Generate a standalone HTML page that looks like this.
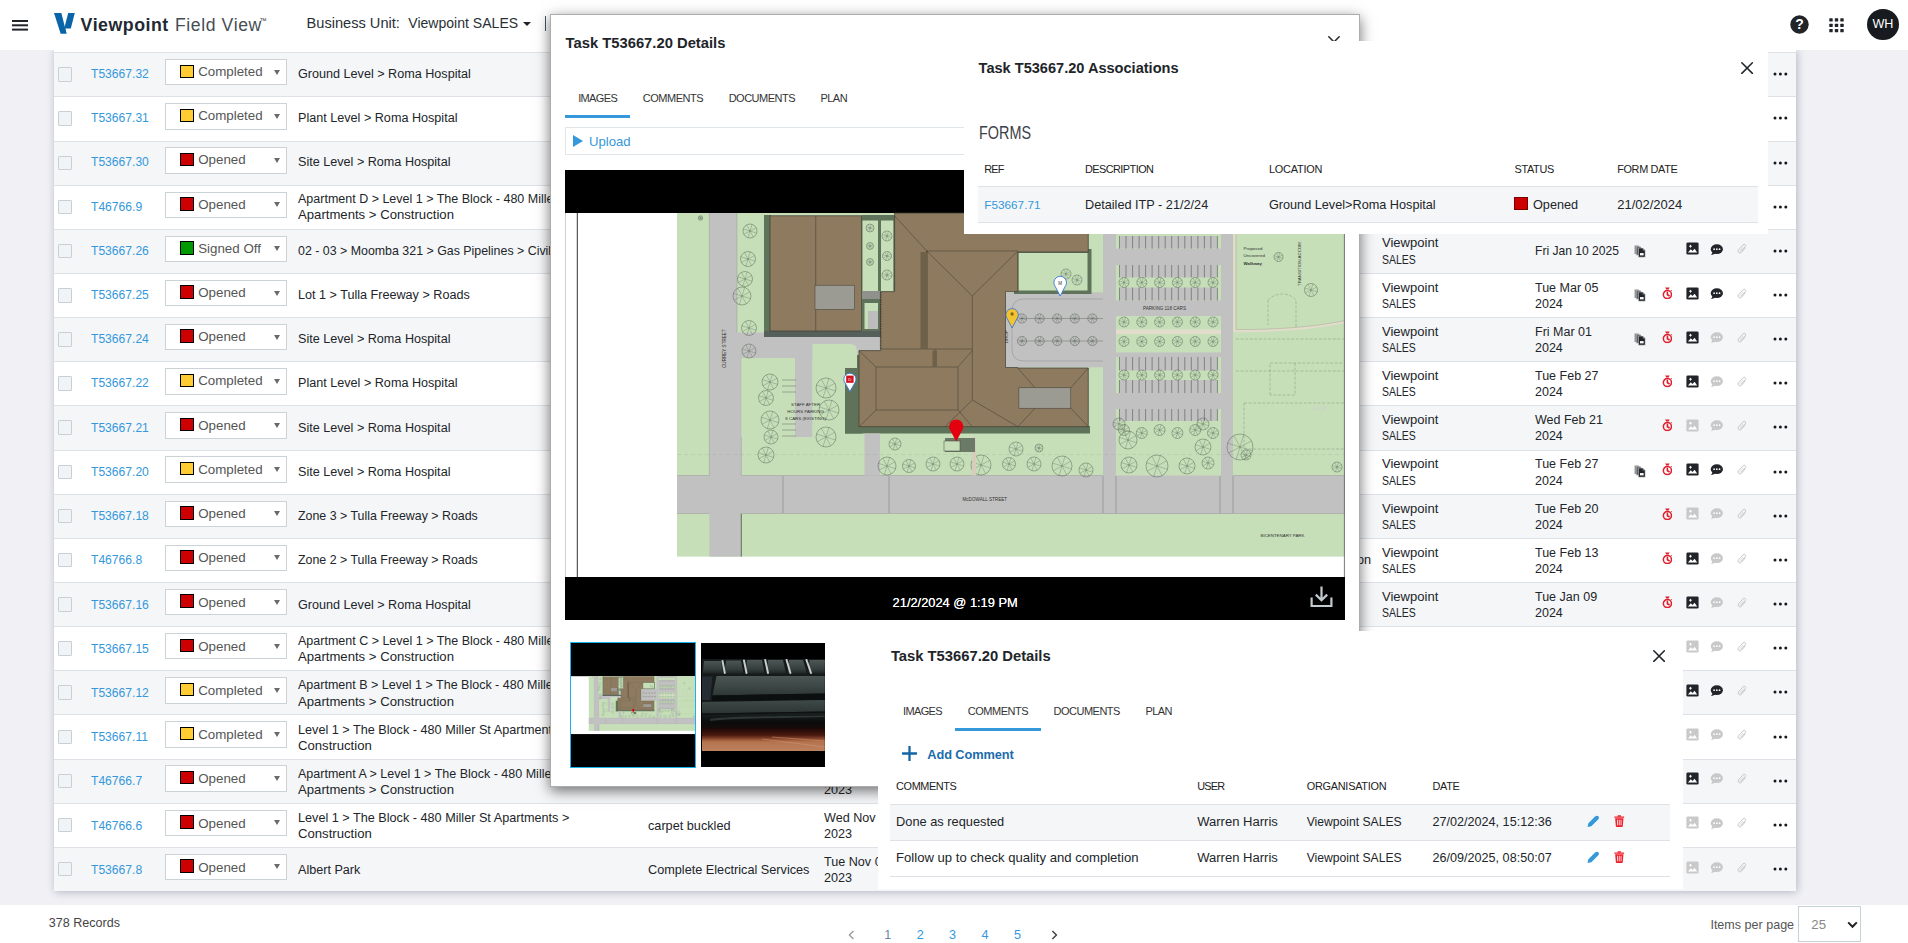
<!DOCTYPE html><html><head><meta charset="utf-8"><title>Viewpoint Field View</title><style>
*{box-sizing:border-box;margin:0;padding:0}
html,body{width:1908px;height:943px;overflow:hidden}
body{background:#f0f0f5;font-family:"Liberation Sans", sans-serif;color:#212529;position:relative}
.t{position:absolute;white-space:nowrap;line-height:1}
.abs{position:absolute}
#hdr{position:absolute;left:0;top:0;width:1908px;height:50px;background:#fff;z-index:2}
.ov{z-index:5}
#tbl{position:absolute;left:54px;top:50px;width:1742px;height:841px;background:#fff;box-shadow:1px 1px 8px rgba(40,40,80,.3)}
.row{position:absolute;left:0;width:1742px}
.row::before{content:"";position:absolute;left:0;right:0;top:0;height:1px;background:#dee2e6}
.row.alt{background:#f5f6f8}
.cb{position:absolute;left:4px;width:14px;height:14.5px;border:1px solid #c9d0d4;background:#f1f4f6;border-radius:1px}
.dd{position:absolute;left:111px;width:122px;height:26.4px;border:1px solid #ccd3d6;background:#fff}
.sw{position:absolute;left:13.6px;top:4.5px;width:14.3px;height:13.5px;border:1px solid #000}
.ar{position:absolute;left:108.3px;top:9.7px;width:0;height:0;border-left:3.2px solid transparent;border-right:3.2px solid transparent;border-top:5.2px solid #6a6a6a}
.two{position:absolute;line-height:16.1px;font-size:12.7px;white-space:nowrap}
#ftr{position:absolute;left:0;top:904.6px;width:1908px;height:39px;background:#fff}
#m1{position:absolute;left:549.8px;top:14.2px;width:810.4px;height:773.3px;background:#fff;border:1px solid rgba(0,0,0,.32);box-shadow:0 4px 13px rgba(0,0,0,.55)}
#p2{position:absolute;left:964px;top:41px;width:804px;height:193px;background:#fff}
#p3{position:absolute;left:878px;top:631px;width:805px;height:257.8px;background:#fff}
.hl{position:absolute;height:1px;background:#dee2e6}
</style></head><body>
<svg width="0" height="0" style="position:absolute"><defs>
<symbol id="i-img" viewBox="0 0 16 16"><rect x="0.5" y="0.5" width="15" height="15" rx="1.7" fill="currentColor"/><path d="M2.4 13 L5.9 9 L8 11 L10.6 8.4 L13.7 13 Z" fill="#fff"/><path d="M3.8 5.2h3.4M5.5 3.5v3.4" stroke="#fff" stroke-width="1.15"/></symbol>
<symbol id="i-cmt" viewBox="0 0 16 14"><ellipse cx="8.3" cy="6.3" rx="7.4" ry="5.9" fill="currentColor"/><path d="M3.4 9.8 L1.2 13.6 L7 11.6 Z" fill="currentColor"/><circle cx="5" cy="6.3" r="1.05" fill="#fff"/><circle cx="8.3" cy="6.3" r="1.05" fill="#fff"/><circle cx="11.6" cy="6.3" r="1.05" fill="#fff"/></symbol>
<symbol id="i-clip" viewBox="0 0 12 13"><g transform="translate(6 6.5) rotate(42) translate(-2.4 -6.4)"><path d="M4.6 3.6 V10.2 A2.2 2.2 0 0 1 0.2 10.2 V2.4 A1.7 1.7 0 0 1 3.6 2.4 V9.6" fill="none" stroke="currentColor" stroke-width=".95" stroke-linecap="round"/><path d="M2.1 9.8 V4" fill="none" stroke="currentColor" stroke-width=".7" stroke-linecap="round" opacity=".8"/></g></symbol>
<symbol id="i-copy" viewBox="0 0 13 14"><path d="M0.6 1.2 h4.2 l1.8 1.8 v7.2 h-6 z" fill="#8a8d90"/><path d="M2.4 2.4 h4.2 l1.8 1.8 v7.2 h-6 z" fill="#55595d" stroke="#fff" stroke-width=".4"/><path d="M4.6 3.9 h4.6 l2.6 2.6 v7 h-7.2 z" fill="#212529" stroke="#fff" stroke-width=".5"/><rect x="6.3" y="9.2" width="3.8" height="2.4" fill="#fff"/><path d="M9.2 3.9 v2.6 h2.6" fill="#8a8d90"/></symbol>
<symbol id="i-tmr" viewBox="0 0 12 14"><circle cx="6" cy="8.4" r="4.5" fill="none" stroke="currentColor" stroke-width="1.7"/><path d="M3.5 0.5 h5 l-1.3 2.4 h-2.4 z" fill="currentColor"/><path d="M6 5.9 V8.6 L7.9 9.7" fill="none" stroke="currentColor" stroke-width="1.8" stroke-linecap="round" stroke-linejoin="round"/><path d="M9.9 3.7 l.9 .9" stroke="currentColor" stroke-width="1.2"/></symbol>
<symbol id="i-pen" viewBox="0 0 14 14"><path d="M0.6 13.4 L1.5 9.2 L9.3 1.4 C10.2 0.5 11.7 0.5 12.6 1.4 C13.5 2.3 13.5 3.8 12.6 4.7 L4.8 12.5 Z" fill="currentColor"/></symbol>
<symbol id="i-trash" viewBox="0 0 12 14"><path d="M1.3 3.6 h9.4 l-.8 9 c0 .6 -.5 1 -1.1 1 h-5.6 c-.6 0 -1.1 -.4 -1.1 -1 z" fill="currentColor"/><rect x="0.4" y="1.6" width="11.2" height="1.5" rx=".4" fill="currentColor"/><rect x="4" y="0.3" width="4" height="1.6" rx=".5" fill="currentColor"/><path d="M4 5.4 v6.2 M6 5.4 v6.2 M8 5.4 v6.2" stroke="#fff" stroke-width=".9"/></symbol>
<symbol id="i-x" viewBox="0 0 12 12"><path d="M0.8 0.8 L11.2 11.2 M11.2 0.8 L0.8 11.2" stroke="currentColor" stroke-width="1.5" stroke-linecap="round"/></symbol>
</defs></svg>
<div id="hdr">
<div class="abs" style="left:12px;top:19.6px;width:16.3px;height:2px;background:#212529;box-shadow:0 4.3px 0 #212529,0 8.6px 0 #212529"></div>
<svg class="abs" style="left:53px;top:12px" width="24" height="24" viewBox="0 0 24 24"><path d="M1 1 H8.4 L13.5 21.6 H7.6 Z" fill="#0a64a8"/><path d="M15.2 1 H21.8 L17.8 16.6 H11.2 Z" fill="#0a64a8"/><path d="M7.6 21.6 L9 16.6 H12.3 L13.5 21.6 Z" fill="#0a64a8"/></svg>
<span class="t " style="left:80.6px;top:17.02px;font-size:17.8px;font-weight:700;color:#1f2a33;letter-spacing:.5px">Viewpoint</span>
<span class="t " style="left:175.0px;top:17.02px;font-size:17.6px;font-weight:400;color:#454d55;letter-spacing:.6px">Field View</span>
<span class="t " style="left:259.5px;top:17.02px;font-size:7px;font-weight:400;color:#2a333b;">™</span>
<span class="t " style="left:306.6px;top:16.02px;font-size:14.6px;font-weight:400;color:#2a2f36;">Business Unit:</span>
<span class="t " style="left:408.3px;top:16.02px;font-size:14.05px;font-weight:400;color:#2a2f36;">Viewpoint SALES</span>
<div class="abs" style="left:523.4px;top:22px;border-left:4px solid transparent;border-right:4px solid transparent;border-top:4.4px solid #222"></div>
<div class="abs" style="left:545.2px;top:15.5px;width:1.2px;height:15px;background:#456"></div>
<svg class="abs" style="left:1790px;top:15px" width="19" height="19" viewBox="0 0 19 19"><circle cx="9.5" cy="9.5" r="9.2" fill="#212529"/><text x="9.5" y="14.4" text-anchor="middle" font-family="Liberation Sans, sans-serif" font-weight="700" font-size="14" fill="#fff">?</text></svg>
<svg class="abs" style="left:1828.5px;top:17.8px" width="15" height="15"><rect x="0.3" y="0.3" width="3.4" height="3.2" rx=".5" fill="#212529"/><rect x="0.3" y="5.7" width="3.4" height="3.2" rx=".5" fill="#212529"/><rect x="0.3" y="11.1" width="3.4" height="3.2" rx=".5" fill="#212529"/><rect x="5.8" y="0.3" width="3.4" height="3.2" rx=".5" fill="#212529"/><rect x="5.8" y="5.7" width="3.4" height="3.2" rx=".5" fill="#212529"/><rect x="5.8" y="11.1" width="3.4" height="3.2" rx=".5" fill="#212529"/><rect x="11.3" y="0.3" width="3.4" height="3.2" rx=".5" fill="#212529"/><rect x="11.3" y="5.7" width="3.4" height="3.2" rx=".5" fill="#212529"/><rect x="11.3" y="11.1" width="3.4" height="3.2" rx=".5" fill="#212529"/></svg>
<div class="abs" style="left:1867px;top:8.8px;width:32px;height:31.5px;border-radius:50%;background:#171b1f"></div>
<span class="t " style="left:1872.6px;top:18.02px;font-size:12.6px;font-weight:400;color:#fff;letter-spacing:-.3px">WH</span>
</div>
<div id="tbl">
<div class="row alt" style="top:2.20px;height:44.15px">
<div class="abs" style="left:0;top:.5px;width:1742px;height:0">
<div class="cb" style="top:14.6px"></div>
<span class="t " style="left:37.0px;top:15.32px;font-size:12.1px;font-weight:400;color:#3498db;">T53667.32</span>
<div class="dd" style="top:6.4px"><div class="sw" style="background:#ffcc33"></div><span class="t " style="left:32.2px;top:4.92px;font-size:13.33px;font-weight:400;color:#555;">Completed</span><div class="ar"></div></div>
<span class="t " style="left:244.0px;top:15.32px;font-size:12.62px;font-weight:400;color:#212529;">Ground Level &gt; Roma Hospital</span>
<svg class="abs" style="left:1718.6px;top:19.6px" width="15" height="4"><circle cx="2" cy="2" r="1.5" fill="#16191c"/><circle cx="7.4" cy="2" r="1.5" fill="#16191c"/><circle cx="12.8" cy="2" r="1.5" fill="#16191c"/></svg>
</div></div>
<div class="row" style="top:46.35px;height:44.15px">
<div class="abs" style="left:0;top:.5px;width:1742px;height:0">
<div class="cb" style="top:14.6px"></div>
<span class="t " style="left:37.0px;top:15.17px;font-size:12.1px;font-weight:400;color:#3498db;">T53667.31</span>
<div class="dd" style="top:6.4px"><div class="sw" style="background:#ffcc33"></div><span class="t " style="left:32.2px;top:4.77px;font-size:13.33px;font-weight:400;color:#555;">Completed</span><div class="ar"></div></div>
<span class="t " style="left:244.0px;top:15.17px;font-size:12.62px;font-weight:400;color:#212529;">Plant Level &gt; Roma Hospital</span>
<svg class="abs" style="left:1718.6px;top:19.6px" width="15" height="4"><circle cx="2" cy="2" r="1.5" fill="#16191c"/><circle cx="7.4" cy="2" r="1.5" fill="#16191c"/><circle cx="12.8" cy="2" r="1.5" fill="#16191c"/></svg>
</div></div>
<div class="row alt" style="top:90.50px;height:44.15px">
<div class="abs" style="left:0;top:.5px;width:1742px;height:0">
<div class="cb" style="top:14.6px"></div>
<span class="t " style="left:37.0px;top:15.02px;font-size:12.1px;font-weight:400;color:#3498db;">T53667.30</span>
<div class="dd" style="top:6.4px"><div class="sw" style="background:#cc0000"></div><span class="t " style="left:32.2px;top:4.62px;font-size:13.33px;font-weight:400;color:#555;">Opened</span><div class="ar"></div></div>
<span class="t " style="left:244.0px;top:15.02px;font-size:12.62px;font-weight:400;color:#212529;">Site Level &gt; Roma Hospital</span>
<svg class="abs" style="left:1718.6px;top:19.6px" width="15" height="4"><circle cx="2" cy="2" r="1.5" fill="#16191c"/><circle cx="7.4" cy="2" r="1.5" fill="#16191c"/><circle cx="12.8" cy="2" r="1.5" fill="#16191c"/></svg>
</div></div>
<div class="row" style="top:134.65px;height:44.15px">
<div class="abs" style="left:0;top:.5px;width:1742px;height:0">
<div class="cb" style="top:14.6px"></div>
<span class="t " style="left:37.0px;top:15.87px;font-size:12.1px;font-weight:400;color:#3498db;">T46766.9</span>
<div class="dd" style="top:6.4px"><div class="sw" style="background:#cc0000"></div><span class="t " style="left:32.2px;top:5.47px;font-size:13.33px;font-weight:400;color:#555;">Opened</span><div class="ar"></div></div>
<span class="t " style="left:244.0px;top:7.87px;font-size:12.5px;font-weight:400;color:#212529;">Apartment D &gt; Level 1 &gt; The Block - 480 Miller St</span><span class="t " style="left:244.0px;top:22.87px;font-size:13.15px;font-weight:400;color:#212529;">Apartments &gt; Construction</span>
<svg class="abs" style="left:1718.6px;top:19.6px" width="15" height="4"><circle cx="2" cy="2" r="1.5" fill="#16191c"/><circle cx="7.4" cy="2" r="1.5" fill="#16191c"/><circle cx="12.8" cy="2" r="1.5" fill="#16191c"/></svg>
</div></div>
<div class="row alt" style="top:178.80px;height:44.15px">
<div class="abs" style="left:0;top:.5px;width:1742px;height:0">
<div class="cb" style="top:14.6px"></div>
<span class="t " style="left:37.0px;top:15.72px;font-size:12.1px;font-weight:400;color:#3498db;">T53667.26</span>
<div class="dd" style="top:6.4px"><div class="sw" style="background:#009900"></div><span class="t " style="left:32.2px;top:5.32px;font-size:13.33px;font-weight:400;color:#555;">Signed Off</span><div class="ar"></div></div>
<span class="t " style="left:244.0px;top:15.72px;font-size:12.4px;font-weight:400;color:#212529;">02 - 03 &gt; Moomba 321 &gt; Gas Pipelines &gt; Civil</span>
<span class="t " style="left:1328.0px;top:6.72px;font-size:13.05px;font-weight:400;color:#212529;">Viewpoint</span><span class="t " style="left:1328.0px;top:24.72px;font-size:12.7px;font-weight:400;color:#212529;transform:scaleX(.826);transform-origin:0 0">SALES</span>
<span class="t " style="left:1481.0px;top:15.72px;font-size:12.08px;font-weight:400;color:#212529;">Fri Jan 10 2025</span>
<svg class="abs" style="left:1580.4px;top:14.4px;color:#212529" width="12.4" height="14"><use href="#i-copy"/></svg>
<svg class="abs" style="left:1631.7px;top:13.2px;color:#212529" width="13" height="13"><use href="#i-img"/></svg>
<svg class="abs" style="left:1656.2px;top:14.3px;color:#212529" width="13.2" height="11.6"><use href="#i-cmt"/></svg>
<svg class="abs" style="left:1683.2px;top:14.2px;color:#c2c2c2" width="10.4" height="11.2"><use href="#i-clip"/></svg>
<svg class="abs" style="left:1718.6px;top:19.6px" width="15" height="4"><circle cx="2" cy="2" r="1.5" fill="#16191c"/><circle cx="7.4" cy="2" r="1.5" fill="#16191c"/><circle cx="12.8" cy="2" r="1.5" fill="#16191c"/></svg>
</div></div>
<div class="row" style="top:222.95px;height:44.15px">
<div class="abs" style="left:0;top:.5px;width:1742px;height:0">
<div class="cb" style="top:14.6px"></div>
<span class="t " style="left:37.0px;top:15.57px;font-size:12.1px;font-weight:400;color:#3498db;">T53667.25</span>
<div class="dd" style="top:6.4px"><div class="sw" style="background:#cc0000"></div><span class="t " style="left:32.2px;top:5.17px;font-size:13.33px;font-weight:400;color:#555;">Opened</span><div class="ar"></div></div>
<span class="t " style="left:244.0px;top:15.57px;font-size:12.62px;font-weight:400;color:#212529;">Lot 1 &gt; Tulla Freeway &gt; Roads</span>
<span class="t " style="left:1328.0px;top:7.57px;font-size:13.05px;font-weight:400;color:#212529;">Viewpoint</span><span class="t " style="left:1328.0px;top:24.57px;font-size:12.7px;font-weight:400;color:#212529;transform:scaleX(.826);transform-origin:0 0">SALES</span>
<span class="t " style="left:1481.0px;top:8.57px;font-size:12.5px;font-weight:400;color:#212529;">Tue Mar 05</span><span class="t " style="left:1481.0px;top:24.57px;font-size:12.5px;font-weight:400;color:#212529;">2024</span>
<svg class="abs" style="left:1580.4px;top:14.4px;color:#212529" width="12.4" height="14"><use href="#i-copy"/></svg>
<svg class="abs" style="left:1607.6px;top:13.4px;color:#e01f2d" width="10.8" height="12.6"><use href="#i-tmr"/></svg>
<svg class="abs" style="left:1631.7px;top:13.2px;color:#212529" width="13" height="13"><use href="#i-img"/></svg>
<svg class="abs" style="left:1656.2px;top:14.3px;color:#212529" width="13.2" height="11.6"><use href="#i-cmt"/></svg>
<svg class="abs" style="left:1683.2px;top:14.2px;color:#c2c2c2" width="10.4" height="11.2"><use href="#i-clip"/></svg>
<svg class="abs" style="left:1718.6px;top:19.6px" width="15" height="4"><circle cx="2" cy="2" r="1.5" fill="#16191c"/><circle cx="7.4" cy="2" r="1.5" fill="#16191c"/><circle cx="12.8" cy="2" r="1.5" fill="#16191c"/></svg>
</div></div>
<div class="row alt" style="top:267.10px;height:44.15px">
<div class="abs" style="left:0;top:.5px;width:1742px;height:0">
<div class="cb" style="top:14.6px"></div>
<span class="t " style="left:37.0px;top:15.42px;font-size:12.1px;font-weight:400;color:#3498db;">T53667.24</span>
<div class="dd" style="top:6.4px"><div class="sw" style="background:#cc0000"></div><span class="t " style="left:32.2px;top:5.02px;font-size:13.33px;font-weight:400;color:#555;">Opened</span><div class="ar"></div></div>
<span class="t " style="left:244.0px;top:15.42px;font-size:12.62px;font-weight:400;color:#212529;">Site Level &gt; Roma Hospital</span>
<span class="t " style="left:1328.0px;top:7.42px;font-size:13.05px;font-weight:400;color:#212529;">Viewpoint</span><span class="t " style="left:1328.0px;top:24.42px;font-size:12.7px;font-weight:400;color:#212529;transform:scaleX(.826);transform-origin:0 0">SALES</span>
<span class="t " style="left:1481.0px;top:8.42px;font-size:12.5px;font-weight:400;color:#212529;">Fri Mar 01</span><span class="t " style="left:1481.0px;top:24.42px;font-size:12.5px;font-weight:400;color:#212529;">2024</span>
<svg class="abs" style="left:1580.4px;top:14.4px;color:#212529" width="12.4" height="14"><use href="#i-copy"/></svg>
<svg class="abs" style="left:1607.6px;top:13.4px;color:#e01f2d" width="10.8" height="12.6"><use href="#i-tmr"/></svg>
<svg class="abs" style="left:1631.7px;top:13.2px;color:#212529" width="13" height="13"><use href="#i-img"/></svg>
<svg class="abs" style="left:1656.2px;top:14.3px;color:#c9c9c9" width="13.2" height="11.6"><use href="#i-cmt"/></svg>
<svg class="abs" style="left:1683.2px;top:14.2px;color:#c2c2c2" width="10.4" height="11.2"><use href="#i-clip"/></svg>
<svg class="abs" style="left:1718.6px;top:19.6px" width="15" height="4"><circle cx="2" cy="2" r="1.5" fill="#16191c"/><circle cx="7.4" cy="2" r="1.5" fill="#16191c"/><circle cx="12.8" cy="2" r="1.5" fill="#16191c"/></svg>
</div></div>
<div class="row" style="top:311.25px;height:44.15px">
<div class="abs" style="left:0;top:.5px;width:1742px;height:0">
<div class="cb" style="top:14.6px"></div>
<span class="t " style="left:37.0px;top:15.27px;font-size:12.1px;font-weight:400;color:#3498db;">T53667.22</span>
<div class="dd" style="top:6.4px"><div class="sw" style="background:#ffcc33"></div><span class="t " style="left:32.2px;top:4.87px;font-size:13.33px;font-weight:400;color:#555;">Completed</span><div class="ar"></div></div>
<span class="t " style="left:244.0px;top:15.27px;font-size:12.62px;font-weight:400;color:#212529;">Plant Level &gt; Roma Hospital</span>
<span class="t " style="left:1328.0px;top:7.27px;font-size:13.05px;font-weight:400;color:#212529;">Viewpoint</span><span class="t " style="left:1328.0px;top:24.27px;font-size:12.7px;font-weight:400;color:#212529;transform:scaleX(.826);transform-origin:0 0">SALES</span>
<span class="t " style="left:1481.0px;top:8.27px;font-size:12.5px;font-weight:400;color:#212529;">Tue Feb 27</span><span class="t " style="left:1481.0px;top:24.27px;font-size:12.5px;font-weight:400;color:#212529;">2024</span>
<svg class="abs" style="left:1607.6px;top:13.4px;color:#e01f2d" width="10.8" height="12.6"><use href="#i-tmr"/></svg>
<svg class="abs" style="left:1631.7px;top:13.2px;color:#212529" width="13" height="13"><use href="#i-img"/></svg>
<svg class="abs" style="left:1656.2px;top:14.3px;color:#c9c9c9" width="13.2" height="11.6"><use href="#i-cmt"/></svg>
<svg class="abs" style="left:1683.2px;top:14.2px;color:#c2c2c2" width="10.4" height="11.2"><use href="#i-clip"/></svg>
<svg class="abs" style="left:1718.6px;top:19.6px" width="15" height="4"><circle cx="2" cy="2" r="1.5" fill="#16191c"/><circle cx="7.4" cy="2" r="1.5" fill="#16191c"/><circle cx="12.8" cy="2" r="1.5" fill="#16191c"/></svg>
</div></div>
<div class="row alt" style="top:355.40px;height:44.15px">
<div class="abs" style="left:0;top:.5px;width:1742px;height:0">
<div class="cb" style="top:14.6px"></div>
<span class="t " style="left:37.0px;top:16.12px;font-size:12.1px;font-weight:400;color:#3498db;">T53667.21</span>
<div class="dd" style="top:6.4px"><div class="sw" style="background:#cc0000"></div><span class="t " style="left:32.2px;top:5.72px;font-size:13.33px;font-weight:400;color:#555;">Opened</span><div class="ar"></div></div>
<span class="t " style="left:244.0px;top:16.12px;font-size:12.62px;font-weight:400;color:#212529;">Site Level &gt; Roma Hospital</span>
<span class="t " style="left:1328.0px;top:7.12px;font-size:13.05px;font-weight:400;color:#212529;">Viewpoint</span><span class="t " style="left:1328.0px;top:24.12px;font-size:12.7px;font-weight:400;color:#212529;transform:scaleX(.826);transform-origin:0 0">SALES</span>
<span class="t " style="left:1481.0px;top:8.12px;font-size:12.5px;font-weight:400;color:#212529;">Wed Feb 21</span><span class="t " style="left:1481.0px;top:24.12px;font-size:12.5px;font-weight:400;color:#212529;">2024</span>
<svg class="abs" style="left:1607.6px;top:13.4px;color:#e01f2d" width="10.8" height="12.6"><use href="#i-tmr"/></svg>
<svg class="abs" style="left:1631.7px;top:13.2px;color:#c9c9c9" width="13" height="13"><use href="#i-img"/></svg>
<svg class="abs" style="left:1656.2px;top:14.3px;color:#c9c9c9" width="13.2" height="11.6"><use href="#i-cmt"/></svg>
<svg class="abs" style="left:1683.2px;top:14.2px;color:#c2c2c2" width="10.4" height="11.2"><use href="#i-clip"/></svg>
<svg class="abs" style="left:1718.6px;top:19.6px" width="15" height="4"><circle cx="2" cy="2" r="1.5" fill="#16191c"/><circle cx="7.4" cy="2" r="1.5" fill="#16191c"/><circle cx="12.8" cy="2" r="1.5" fill="#16191c"/></svg>
</div></div>
<div class="row" style="top:399.55px;height:44.15px">
<div class="abs" style="left:0;top:.5px;width:1742px;height:0">
<div class="cb" style="top:14.6px"></div>
<span class="t " style="left:37.0px;top:15.97px;font-size:12.1px;font-weight:400;color:#3498db;">T53667.20</span>
<div class="dd" style="top:6.4px"><div class="sw" style="background:#ffcc33"></div><span class="t " style="left:32.2px;top:5.57px;font-size:13.33px;font-weight:400;color:#555;">Completed</span><div class="ar"></div></div>
<span class="t " style="left:244.0px;top:15.97px;font-size:12.62px;font-weight:400;color:#212529;">Site Level &gt; Roma Hospital</span>
<span class="t " style="left:1328.0px;top:6.97px;font-size:13.05px;font-weight:400;color:#212529;">Viewpoint</span><span class="t " style="left:1328.0px;top:24.97px;font-size:12.7px;font-weight:400;color:#212529;transform:scaleX(.826);transform-origin:0 0">SALES</span>
<span class="t " style="left:1481.0px;top:7.97px;font-size:12.5px;font-weight:400;color:#212529;">Tue Feb 27</span><span class="t " style="left:1481.0px;top:24.97px;font-size:12.5px;font-weight:400;color:#212529;">2024</span>
<svg class="abs" style="left:1580.4px;top:14.4px;color:#212529" width="12.4" height="14"><use href="#i-copy"/></svg>
<svg class="abs" style="left:1607.6px;top:13.4px;color:#e01f2d" width="10.8" height="12.6"><use href="#i-tmr"/></svg>
<svg class="abs" style="left:1631.7px;top:13.2px;color:#212529" width="13" height="13"><use href="#i-img"/></svg>
<svg class="abs" style="left:1656.2px;top:14.3px;color:#212529" width="13.2" height="11.6"><use href="#i-cmt"/></svg>
<svg class="abs" style="left:1683.2px;top:14.2px;color:#c2c2c2" width="10.4" height="11.2"><use href="#i-clip"/></svg>
<svg class="abs" style="left:1718.6px;top:19.6px" width="15" height="4"><circle cx="2" cy="2" r="1.5" fill="#16191c"/><circle cx="7.4" cy="2" r="1.5" fill="#16191c"/><circle cx="12.8" cy="2" r="1.5" fill="#16191c"/></svg>
</div></div>
<div class="row alt" style="top:443.70px;height:44.15px">
<div class="abs" style="left:0;top:.5px;width:1742px;height:0">
<div class="cb" style="top:14.6px"></div>
<span class="t " style="left:37.0px;top:15.82px;font-size:12.1px;font-weight:400;color:#3498db;">T53667.18</span>
<div class="dd" style="top:6.4px"><div class="sw" style="background:#cc0000"></div><span class="t " style="left:32.2px;top:5.42px;font-size:13.33px;font-weight:400;color:#555;">Opened</span><div class="ar"></div></div>
<span class="t " style="left:244.0px;top:15.82px;font-size:12.4px;font-weight:400;color:#212529;">Zone 3 &gt; Tulla Freeway &gt; Roads</span>
<span class="t " style="left:1328.0px;top:7.82px;font-size:13.05px;font-weight:400;color:#212529;">Viewpoint</span><span class="t " style="left:1328.0px;top:24.82px;font-size:12.7px;font-weight:400;color:#212529;transform:scaleX(.826);transform-origin:0 0">SALES</span>
<span class="t " style="left:1481.0px;top:8.82px;font-size:12.5px;font-weight:400;color:#212529;">Tue Feb 20</span><span class="t " style="left:1481.0px;top:24.82px;font-size:12.5px;font-weight:400;color:#212529;">2024</span>
<svg class="abs" style="left:1607.6px;top:13.4px;color:#e01f2d" width="10.8" height="12.6"><use href="#i-tmr"/></svg>
<svg class="abs" style="left:1631.7px;top:13.2px;color:#c9c9c9" width="13" height="13"><use href="#i-img"/></svg>
<svg class="abs" style="left:1656.2px;top:14.3px;color:#c9c9c9" width="13.2" height="11.6"><use href="#i-cmt"/></svg>
<svg class="abs" style="left:1683.2px;top:14.2px;color:#c2c2c2" width="10.4" height="11.2"><use href="#i-clip"/></svg>
<svg class="abs" style="left:1718.6px;top:19.6px" width="15" height="4"><circle cx="2" cy="2" r="1.5" fill="#16191c"/><circle cx="7.4" cy="2" r="1.5" fill="#16191c"/><circle cx="12.8" cy="2" r="1.5" fill="#16191c"/></svg>
</div></div>
<div class="row" style="top:487.85px;height:44.15px">
<div class="abs" style="left:0;top:.5px;width:1742px;height:0">
<div class="cb" style="top:14.6px"></div>
<span class="t " style="left:37.0px;top:15.67px;font-size:12.1px;font-weight:400;color:#3498db;">T46766.8</span>
<div class="dd" style="top:6.4px"><div class="sw" style="background:#cc0000"></div><span class="t " style="left:32.2px;top:5.27px;font-size:13.33px;font-weight:400;color:#555;">Opened</span><div class="ar"></div></div>
<span class="t " style="left:244.0px;top:15.67px;font-size:12.4px;font-weight:400;color:#212529;">Zone 2 &gt; Tulla Freeway &gt; Roads</span>
<span class="t " style="left:1328.0px;top:7.67px;font-size:13.05px;font-weight:400;color:#212529;">Viewpoint</span><span class="t " style="left:1328.0px;top:24.67px;font-size:12.7px;font-weight:400;color:#212529;transform:scaleX(.826);transform-origin:0 0">SALES</span>
<span class="t " style="left:1481.0px;top:8.67px;font-size:12.5px;font-weight:400;color:#212529;">Tue Feb 13</span><span class="t " style="left:1481.0px;top:24.67px;font-size:12.5px;font-weight:400;color:#212529;">2024</span>
<span class="t " style="left:1303.0px;top:15.67px;font-size:12.7px;font-weight:400;color:#212529;">on</span>
<svg class="abs" style="left:1607.6px;top:13.4px;color:#e01f2d" width="10.8" height="12.6"><use href="#i-tmr"/></svg>
<svg class="abs" style="left:1631.7px;top:13.2px;color:#212529" width="13" height="13"><use href="#i-img"/></svg>
<svg class="abs" style="left:1656.2px;top:14.3px;color:#c9c9c9" width="13.2" height="11.6"><use href="#i-cmt"/></svg>
<svg class="abs" style="left:1683.2px;top:14.2px;color:#c2c2c2" width="10.4" height="11.2"><use href="#i-clip"/></svg>
<svg class="abs" style="left:1718.6px;top:19.6px" width="15" height="4"><circle cx="2" cy="2" r="1.5" fill="#16191c"/><circle cx="7.4" cy="2" r="1.5" fill="#16191c"/><circle cx="12.8" cy="2" r="1.5" fill="#16191c"/></svg>
</div></div>
<div class="row alt" style="top:532.00px;height:44.15px">
<div class="abs" style="left:0;top:.5px;width:1742px;height:0">
<div class="cb" style="top:14.6px"></div>
<span class="t " style="left:37.0px;top:16.52px;font-size:12.1px;font-weight:400;color:#3498db;">T53667.16</span>
<div class="dd" style="top:6.4px"><div class="sw" style="background:#cc0000"></div><span class="t " style="left:32.2px;top:6.12px;font-size:13.33px;font-weight:400;color:#555;">Opened</span><div class="ar"></div></div>
<span class="t " style="left:244.0px;top:16.52px;font-size:12.62px;font-weight:400;color:#212529;">Ground Level &gt; Roma Hospital</span>
<span class="t " style="left:1328.0px;top:7.52px;font-size:13.05px;font-weight:400;color:#212529;">Viewpoint</span><span class="t " style="left:1328.0px;top:24.52px;font-size:12.7px;font-weight:400;color:#212529;transform:scaleX(.826);transform-origin:0 0">SALES</span>
<span class="t " style="left:1481.0px;top:8.52px;font-size:12.5px;font-weight:400;color:#212529;">Tue Jan 09</span><span class="t " style="left:1481.0px;top:24.52px;font-size:12.5px;font-weight:400;color:#212529;">2024</span>
<svg class="abs" style="left:1607.6px;top:13.4px;color:#e01f2d" width="10.8" height="12.6"><use href="#i-tmr"/></svg>
<svg class="abs" style="left:1631.7px;top:13.2px;color:#212529" width="13" height="13"><use href="#i-img"/></svg>
<svg class="abs" style="left:1656.2px;top:14.3px;color:#c9c9c9" width="13.2" height="11.6"><use href="#i-cmt"/></svg>
<svg class="abs" style="left:1683.2px;top:14.2px;color:#c2c2c2" width="10.4" height="11.2"><use href="#i-clip"/></svg>
<svg class="abs" style="left:1718.6px;top:19.6px" width="15" height="4"><circle cx="2" cy="2" r="1.5" fill="#16191c"/><circle cx="7.4" cy="2" r="1.5" fill="#16191c"/><circle cx="12.8" cy="2" r="1.5" fill="#16191c"/></svg>
</div></div>
<div class="row" style="top:576.15px;height:44.15px">
<div class="abs" style="left:0;top:.5px;width:1742px;height:0">
<div class="cb" style="top:14.6px"></div>
<span class="t " style="left:37.0px;top:16.37px;font-size:12.1px;font-weight:400;color:#3498db;">T53667.15</span>
<div class="dd" style="top:6.4px"><div class="sw" style="background:#cc0000"></div><span class="t " style="left:32.2px;top:5.97px;font-size:13.33px;font-weight:400;color:#555;">Opened</span><div class="ar"></div></div>
<span class="t " style="left:244.0px;top:8.37px;font-size:12.5px;font-weight:400;color:#212529;">Apartment C &gt; Level 1 &gt; The Block - 480 Miller St</span><span class="t " style="left:244.0px;top:23.37px;font-size:13.15px;font-weight:400;color:#212529;">Apartments &gt; Construction</span>
<svg class="abs" style="left:1631.7px;top:13.2px;color:#c9c9c9" width="13" height="13"><use href="#i-img"/></svg>
<svg class="abs" style="left:1656.2px;top:14.3px;color:#c9c9c9" width="13.2" height="11.6"><use href="#i-cmt"/></svg>
<svg class="abs" style="left:1683.2px;top:14.2px;color:#c2c2c2" width="10.4" height="11.2"><use href="#i-clip"/></svg>
<svg class="abs" style="left:1718.6px;top:19.6px" width="15" height="4"><circle cx="2" cy="2" r="1.5" fill="#16191c"/><circle cx="7.4" cy="2" r="1.5" fill="#16191c"/><circle cx="12.8" cy="2" r="1.5" fill="#16191c"/></svg>
</div></div>
<div class="row alt" style="top:620.30px;height:44.15px">
<div class="abs" style="left:0;top:.5px;width:1742px;height:0">
<div class="cb" style="top:14.6px"></div>
<span class="t " style="left:37.0px;top:16.22px;font-size:12.1px;font-weight:400;color:#3498db;">T53667.12</span>
<div class="dd" style="top:6.4px"><div class="sw" style="background:#ffcc33"></div><span class="t " style="left:32.2px;top:5.82px;font-size:13.33px;font-weight:400;color:#555;">Completed</span><div class="ar"></div></div>
<span class="t " style="left:244.0px;top:8.22px;font-size:12.5px;font-weight:400;color:#212529;">Apartment B &gt; Level 1 &gt; The Block - 480 Miller St</span><span class="t " style="left:244.0px;top:24.22px;font-size:13.15px;font-weight:400;color:#212529;">Apartments &gt; Construction</span>
<svg class="abs" style="left:1631.7px;top:13.2px;color:#212529" width="13" height="13"><use href="#i-img"/></svg>
<svg class="abs" style="left:1656.2px;top:14.3px;color:#212529" width="13.2" height="11.6"><use href="#i-cmt"/></svg>
<svg class="abs" style="left:1683.2px;top:14.2px;color:#c2c2c2" width="10.4" height="11.2"><use href="#i-clip"/></svg>
<svg class="abs" style="left:1718.6px;top:19.6px" width="15" height="4"><circle cx="2" cy="2" r="1.5" fill="#16191c"/><circle cx="7.4" cy="2" r="1.5" fill="#16191c"/><circle cx="12.8" cy="2" r="1.5" fill="#16191c"/></svg>
</div></div>
<div class="row" style="top:664.45px;height:44.15px">
<div class="abs" style="left:0;top:.5px;width:1742px;height:0">
<div class="cb" style="top:14.6px"></div>
<span class="t " style="left:37.0px;top:16.07px;font-size:12.1px;font-weight:400;color:#3498db;">T53667.11</span>
<div class="dd" style="top:6.4px"><div class="sw" style="background:#ffcc33"></div><span class="t " style="left:32.2px;top:5.67px;font-size:13.33px;font-weight:400;color:#555;">Completed</span><div class="ar"></div></div>
<span class="t " style="left:244.0px;top:9.07px;font-size:12.66px;font-weight:400;color:#212529;">Level 1 &gt; The Block - 480 Miller St Apartments &gt;</span><span class="t " style="left:244.0px;top:24.07px;font-size:13.15px;font-weight:400;color:#212529;">Construction</span>
<svg class="abs" style="left:1631.7px;top:13.2px;color:#c9c9c9" width="13" height="13"><use href="#i-img"/></svg>
<svg class="abs" style="left:1656.2px;top:14.3px;color:#c9c9c9" width="13.2" height="11.6"><use href="#i-cmt"/></svg>
<svg class="abs" style="left:1683.2px;top:14.2px;color:#c2c2c2" width="10.4" height="11.2"><use href="#i-clip"/></svg>
<svg class="abs" style="left:1718.6px;top:19.6px" width="15" height="4"><circle cx="2" cy="2" r="1.5" fill="#16191c"/><circle cx="7.4" cy="2" r="1.5" fill="#16191c"/><circle cx="12.8" cy="2" r="1.5" fill="#16191c"/></svg>
</div></div>
<div class="row alt" style="top:708.60px;height:44.15px">
<div class="abs" style="left:0;top:.5px;width:1742px;height:0">
<div class="cb" style="top:14.6px"></div>
<span class="t " style="left:37.0px;top:15.92px;font-size:12.1px;font-weight:400;color:#3498db;">T46766.7</span>
<div class="dd" style="top:6.4px"><div class="sw" style="background:#cc0000"></div><span class="t " style="left:32.2px;top:5.52px;font-size:13.33px;font-weight:400;color:#555;">Opened</span><div class="ar"></div></div>
<span class="t " style="left:244.0px;top:8.92px;font-size:12.5px;font-weight:400;color:#212529;">Apartment A &gt; Level 1 &gt; The Block - 480 Miller St</span><span class="t " style="left:244.0px;top:23.92px;font-size:13.15px;font-weight:400;color:#212529;">Apartments &gt; Construction</span>
<span class="t " style="left:770.0px;top:8.92px;font-size:12.6px;font-weight:400;color:#212529;">Tue Nov 14</span><span class="t " style="left:770.0px;top:24.92px;font-size:12.6px;font-weight:400;color:#212529;">2023</span>
<svg class="abs" style="left:1631.7px;top:13.2px;color:#212529" width="13" height="13"><use href="#i-img"/></svg>
<svg class="abs" style="left:1656.2px;top:14.3px;color:#c9c9c9" width="13.2" height="11.6"><use href="#i-cmt"/></svg>
<svg class="abs" style="left:1683.2px;top:14.2px;color:#c2c2c2" width="10.4" height="11.2"><use href="#i-clip"/></svg>
<svg class="abs" style="left:1718.6px;top:19.6px" width="15" height="4"><circle cx="2" cy="2" r="1.5" fill="#16191c"/><circle cx="7.4" cy="2" r="1.5" fill="#16191c"/><circle cx="12.8" cy="2" r="1.5" fill="#16191c"/></svg>
</div></div>
<div class="row" style="top:752.75px;height:44.15px">
<div class="abs" style="left:0;top:.5px;width:1742px;height:0">
<div class="cb" style="top:14.6px"></div>
<span class="t " style="left:37.0px;top:16.77px;font-size:12.1px;font-weight:400;color:#3498db;">T46766.6</span>
<div class="dd" style="top:6.4px"><div class="sw" style="background:#cc0000"></div><span class="t " style="left:32.2px;top:6.37px;font-size:13.33px;font-weight:400;color:#555;">Opened</span><div class="ar"></div></div>
<span class="t " style="left:244.0px;top:8.77px;font-size:12.66px;font-weight:400;color:#212529;">Level 1 &gt; The Block - 480 Miller St Apartments &gt;</span><span class="t " style="left:244.0px;top:23.77px;font-size:13.15px;font-weight:400;color:#212529;">Construction</span>
<span class="t " style="left:594.0px;top:16.77px;font-size:12.7px;font-weight:400;color:#212529;">carpet buckled</span>
<span class="t " style="left:770.0px;top:8.77px;font-size:12.6px;font-weight:400;color:#212529;">Wed Nov 08</span><span class="t " style="left:770.0px;top:24.77px;font-size:12.6px;font-weight:400;color:#212529;">2023</span>
<svg class="abs" style="left:1631.7px;top:13.2px;color:#c9c9c9" width="13" height="13"><use href="#i-img"/></svg>
<svg class="abs" style="left:1656.2px;top:14.3px;color:#c9c9c9" width="13.2" height="11.6"><use href="#i-cmt"/></svg>
<svg class="abs" style="left:1683.2px;top:14.2px;color:#c2c2c2" width="10.4" height="11.2"><use href="#i-clip"/></svg>
<svg class="abs" style="left:1718.6px;top:19.6px" width="15" height="4"><circle cx="2" cy="2" r="1.5" fill="#16191c"/><circle cx="7.4" cy="2" r="1.5" fill="#16191c"/><circle cx="12.8" cy="2" r="1.5" fill="#16191c"/></svg>
</div></div>
<div class="row alt" style="top:796.90px;height:44.10px">
<div class="abs" style="left:0;top:.5px;width:1742px;height:0">
<div class="cb" style="top:14.6px"></div>
<span class="t " style="left:37.0px;top:16.62px;font-size:12.1px;font-weight:400;color:#3498db;">T53667.8</span>
<div class="dd" style="top:6.4px"><div class="sw" style="background:#cc0000"></div><span class="t " style="left:32.2px;top:6.22px;font-size:13.33px;font-weight:400;color:#555;">Opened</span><div class="ar"></div></div>
<span class="t " style="left:244.0px;top:16.62px;font-size:12.62px;font-weight:400;color:#212529;">Albert Park</span>
<span class="t " style="left:594.0px;top:16.62px;font-size:12.7px;font-weight:400;color:#212529;">Complete Electrical Services</span>
<span class="t " style="left:770.0px;top:8.62px;font-size:12.6px;font-weight:400;color:#212529;">Tue Nov 07</span><span class="t " style="left:770.0px;top:24.62px;font-size:12.6px;font-weight:400;color:#212529;">2023</span>
<svg class="abs" style="left:1631.7px;top:13.2px;color:#c9c9c9" width="13" height="13"><use href="#i-img"/></svg>
<svg class="abs" style="left:1656.2px;top:14.3px;color:#c9c9c9" width="13.2" height="11.6"><use href="#i-cmt"/></svg>
<svg class="abs" style="left:1683.2px;top:14.2px;color:#c2c2c2" width="10.4" height="11.2"><use href="#i-clip"/></svg>
<svg class="abs" style="left:1718.6px;top:19.6px" width="15" height="4"><circle cx="2" cy="2" r="1.5" fill="#16191c"/><circle cx="7.4" cy="2" r="1.5" fill="#16191c"/><circle cx="12.8" cy="2" r="1.5" fill="#16191c"/></svg>
</div></div>
</div>
<div id="ftr">
<span class="t " style="left:48.8px;top:12.42px;font-size:12.55px;font-weight:400;color:#444;">378 Records</span>
<svg class="abs" style="left:848px;top:25px" width="7" height="10" viewBox="0 0 7 10"><path d="M5.4 1 L1.4 5 L5.4 9" fill="none" stroke="#999" stroke-width="1.3"/></svg>
<span class="t " style="left:884.3px;top:24.42px;font-size:12.6px;font-weight:400;color:#6b86a8;">1</span>
<span class="t " style="left:916.7px;top:24.42px;font-size:12.6px;font-weight:400;color:#3498db;">2</span>
<span class="t " style="left:949.1px;top:24.42px;font-size:12.6px;font-weight:400;color:#3498db;">3</span>
<span class="t " style="left:981.5px;top:24.42px;font-size:12.6px;font-weight:400;color:#3498db;">4</span>
<span class="t " style="left:1013.9px;top:24.42px;font-size:12.6px;font-weight:400;color:#3498db;">5</span>
<svg class="abs" style="left:1050.5px;top:25px" width="7" height="10" viewBox="0 0 7 10"><path d="M1.4 1 L5.4 5 L1.4 9" fill="none" stroke="#444" stroke-width="1.5"/></svg>
<span class="t " style="left:1710.4px;top:14.42px;font-size:12.55px;font-weight:400;color:#555;">Items per page</span>
<div class="abs" style="left:1798.3px;top:1.8px;width:62.5px;height:35.2px;border:1px solid #c5d3d6;background:#fff"></div>
<span class="t " style="left:1811.3px;top:13.42px;font-size:13.2px;font-weight:400;color:#888;">25</span>
<svg class="abs" style="left:1847px;top:16px" width="11" height="8" viewBox="0 0 11 8"><path d="M1.2 1.4 L5.5 5.8 L9.8 1.4" fill="none" stroke="#222" stroke-width="2"/></svg>
</div>
<div class="abs ov" style="left:0;top:0;width:1908px;height:943px;overflow:hidden">
<div id="m1"></div>
<span class="t " style="left:565.6px;top:36.02px;font-size:14.78px;font-weight:700;color:#212529;">Task T53667.20 Details</span>
<svg class="abs" style="left:1328.2px;top:36.4px;color:#212529" width="12" height="12"><use href="#i-x"/></svg>
<span class="t " style="left:578.2px;top:93.02px;font-size:11px;font-weight:400;color:#333;letter-spacing:-.65px">IMAGES</span>
<span class="t " style="left:642.8px;top:93.02px;font-size:11px;font-weight:400;color:#333;letter-spacing:-.47px">COMMENTS</span>
<span class="t " style="left:728.7px;top:93.02px;font-size:11px;font-weight:400;color:#333;letter-spacing:-.51px">DOCUMENTS</span>
<span class="t " style="left:820.5px;top:93.02px;font-size:11px;font-weight:400;color:#333;letter-spacing:-.55px">PLAN</span>
<div class="abs" style="left:565px;top:115.1px;width:65px;height:2.7px;background:#3498db"></div>
<div class="abs" style="left:565px;top:127px;width:780px;height:28.4px;border:1px solid #dfe5e8"></div>
<div class="abs" style="left:573px;top:135px;border-top:6px solid transparent;border-bottom:6px solid transparent;border-left:10.6px solid #3498db"></div>
<span class="t " style="left:589.0px;top:135.02px;font-size:13.1px;font-weight:400;color:#3498db;">Upload</span>
<svg class="abs" style="left:565px;top:170px" width="780" height="450" viewBox="565 170 780 450">
<rect x="565" y="170" width="780" height="450" fill="#000"/>
<g id="plan"><rect x="565.0" y="213.0" width="780.0" height="364.0" fill="#fff" /><rect x="677.0" y="213.0" width="668.0" height="343.6" fill="#c6dfb9" /><rect x="709.4" y="213.0" width="27.6" height="145.0" fill="#c1c1c1" /><rect x="709.4" y="357.0" width="31.9" height="199.6" fill="#c1c1c1" /><rect x="677.0" y="475.5" width="668.0" height="38.0" fill="#c1c1c1" /><rect x="737.0" y="332.5" width="143.0" height="25.5" fill="#c1c1c1" /><rect x="795.0" y="357.0" width="17.5" height="80.0" fill="#c1c1c1" /><rect x="1103.0" y="213.0" width="130.0" height="301.0" fill="#c1c1c1" /><rect x="1005.5" y="292.4" width="98.0" height="74.9" fill="#c1c1c1" /><path d="M741.3 513.5V556.6" stroke="#5f735b" stroke-width="1"/><path d="M709.4 213V475.5 M737 213V332.5 M741.3 358V475.5 M677 475.5H709.4 M741.3 475.5H1103 M677 513.5H709.4 M741.3 513.5H1345 M1233 475.5H1345" stroke="#9a9a9a" stroke-width=".5" fill="none"/><path d="M783 476V513 M1116 476V513 M1220 476V513 M1233 476V513 M1103 476V513 M889 476V513" stroke="#777" stroke-width=".5"/><rect x="764.0" y="215.0" width="7.0" height="122.0" fill="#5f735b" /><rect x="764.0" y="331.0" width="120.0" height="6.0" fill="#55605a" /><rect x="861.5" y="215.0" width="33.5" height="76.0" fill="#5f735b" /><rect x="862.5" y="220.5" width="15.5" height="70.5" fill="#c6dfb9" /><rect x="881.0" y="220.5" width="12.3" height="70.5" fill="#c6dfb9" /><rect x="861.5" y="291.0" width="19.5" height="8.0" fill="#8f918c" /><rect x="861.5" y="299.0" width="19.5" height="32.0" fill="#5f735b" /><rect x="864.5" y="303.0" width="13.5" height="26.0" fill="#c6dfb9" /><rect x="868.0" y="311.0" width="10.0" height="18.0" fill="#bdbdbd" /><rect x="845.0" y="355.0" width="17.0" height="78.5" fill="#5f735b" /><rect x="845.0" y="426.0" width="245.0" height="7.5" fill="#5f735b" /><rect x="1014.0" y="249.0" width="77.5" height="45.0" fill="#5f735b" /><rect x="1018.5" y="253.0" width="69.0" height="37.5" fill="#c6dfb9" /><rect x="770.0" y="215.8" width="91.5" height="115.2" fill="#8d7a5f" stroke="#3c3c34" stroke-width=".7"/><path d="M815.7 215.8V331" stroke="#3c3c34" stroke-width=".5"/><rect x="815.0" y="285.2" width="39.6" height="24.2" fill="#9b9b94" stroke="#3c3c34" stroke-width=".5"/><path d="M894.6 213 H1088.3 V252 H1017.8 V291.6 H1005.5 V367.5 H1017.8 V368 H1088.3 V426.7 H859 V350.6 H880.6 V291.6 H894.6 Z" fill="#8d7a5f" stroke="#3c3c34" stroke-width=".7"/><rect x="1018.9" y="387.8" width="51.9" height="20.4" fill="#9b9b94" stroke="#3c3c34" stroke-width=".5"/><path d="M926.8 251 V349 M926.8 251 H1017.8 M926.8 251 L972.3 296 L1017.8 251 M972.3 296 V400 L1017.8 426.7 M972.3 400 L945 426.7 M894.6 215.8 L926.8 251 M859 350.6 L876 367 H958 L972.3 350.6 M876 367 V410 L859 426.7 M876 410 H958 L972.3 426.7 M958 367 V410 M1017.8 368 L1035 387.8 M1088.3 368 L1070.8 387.8 M1017.8 426.7 L1035 408.2 M1088.3 426.7 L1070.8 408.2 M880.6 349 H972.3 M935 349 V367" stroke="#3c3c34" stroke-width=".5" fill="none"/><path d="M880.6 292 V349 M926.8 251 V349" stroke="#2e2e28" stroke-width="1.6" stroke-dasharray="1.2 1.2" opacity=".55"/><rect x="920.5" y="252.0" width="7.0" height="97.0" fill="#6f6049" /><rect x="932.5" y="350.6" width="4.5" height="16.2" fill="#6f6049" /><rect x="864.5" y="433.5" width="15.5" height="42.0" fill="#c1c1c1" /><path d="M1103 299 H1024 Q1012 299 1012 311 V349 Q1012 361 1024 361 H1103" fill="none" stroke="#8c8c8c" stroke-width=".5"/><path d="M812.5 344 H850 Q857 344 857 351 V368 H845 V437 H812.5 Z" fill="#c6dfb9"/><rect x="741.3" y="358.0" width="53.7" height="79.0" fill="#c6dfb9" /><path d="M782 380H796 M782 386H796 M782 392H796 M782 424H796 M782 430H796 M782 436H796" stroke="#666" stroke-width=".5"/><rect x="1116.0" y="213.0" width="105.0" height="35.6" fill="#c6dfb9" /><rect x="1119.5" y="213.0" width="98.0" height="9.0" fill="#c1c1c1" /><path d="M1119.5 213.0V222.0" stroke="#333" stroke-width=".45"/><path d="M1126.0 213.0V222.0" stroke="#333" stroke-width=".45"/><path d="M1132.6 213.0V222.0" stroke="#333" stroke-width=".45"/><path d="M1139.1 213.0V222.0" stroke="#333" stroke-width=".45"/><path d="M1145.6 213.0V222.0" stroke="#333" stroke-width=".45"/><path d="M1152.1 213.0V222.0" stroke="#333" stroke-width=".45"/><path d="M1158.7 213.0V222.0" stroke="#333" stroke-width=".45"/><path d="M1165.2 213.0V222.0" stroke="#333" stroke-width=".45"/><path d="M1171.7 213.0V222.0" stroke="#333" stroke-width=".45"/><path d="M1178.3 213.0V222.0" stroke="#333" stroke-width=".45"/><path d="M1184.8 213.0V222.0" stroke="#333" stroke-width=".45"/><path d="M1191.3 213.0V222.0" stroke="#333" stroke-width=".45"/><path d="M1197.9 213.0V222.0" stroke="#333" stroke-width=".45"/><path d="M1204.4 213.0V222.0" stroke="#333" stroke-width=".45"/><path d="M1210.9 213.0V222.0" stroke="#333" stroke-width=".45"/><path d="M1217.4 213.0V222.0" stroke="#333" stroke-width=".45"/><rect x="1119.5" y="236.0" width="98.0" height="12.6" fill="#c1c1c1" /><path d="M1119.5 236.0V248.6" stroke="#333" stroke-width=".45"/><path d="M1126.0 236.0V248.6" stroke="#333" stroke-width=".45"/><path d="M1132.6 236.0V248.6" stroke="#333" stroke-width=".45"/><path d="M1139.1 236.0V248.6" stroke="#333" stroke-width=".45"/><path d="M1145.6 236.0V248.6" stroke="#333" stroke-width=".45"/><path d="M1152.1 236.0V248.6" stroke="#333" stroke-width=".45"/><path d="M1158.7 236.0V248.6" stroke="#333" stroke-width=".45"/><path d="M1165.2 236.0V248.6" stroke="#333" stroke-width=".45"/><path d="M1171.7 236.0V248.6" stroke="#333" stroke-width=".45"/><path d="M1178.3 236.0V248.6" stroke="#333" stroke-width=".45"/><path d="M1184.8 236.0V248.6" stroke="#333" stroke-width=".45"/><path d="M1191.3 236.0V248.6" stroke="#333" stroke-width=".45"/><path d="M1197.9 236.0V248.6" stroke="#333" stroke-width=".45"/><path d="M1204.4 236.0V248.6" stroke="#333" stroke-width=".45"/><path d="M1210.9 236.0V248.6" stroke="#333" stroke-width=".45"/><path d="M1217.4 236.0V248.6" stroke="#333" stroke-width=".45"/><rect x="1116.0" y="265.0" width="105.0" height="35.5" fill="#c6dfb9" /><rect x="1119.5" y="265.0" width="98.0" height="12.5" fill="#c1c1c1" /><path d="M1119.5 265.0V277.5" stroke="#333" stroke-width=".45"/><path d="M1126.0 265.0V277.5" stroke="#333" stroke-width=".45"/><path d="M1132.6 265.0V277.5" stroke="#333" stroke-width=".45"/><path d="M1139.1 265.0V277.5" stroke="#333" stroke-width=".45"/><path d="M1145.6 265.0V277.5" stroke="#333" stroke-width=".45"/><path d="M1152.1 265.0V277.5" stroke="#333" stroke-width=".45"/><path d="M1158.7 265.0V277.5" stroke="#333" stroke-width=".45"/><path d="M1165.2 265.0V277.5" stroke="#333" stroke-width=".45"/><path d="M1171.7 265.0V277.5" stroke="#333" stroke-width=".45"/><path d="M1178.3 265.0V277.5" stroke="#333" stroke-width=".45"/><path d="M1184.8 265.0V277.5" stroke="#333" stroke-width=".45"/><path d="M1191.3 265.0V277.5" stroke="#333" stroke-width=".45"/><path d="M1197.9 265.0V277.5" stroke="#333" stroke-width=".45"/><path d="M1204.4 265.0V277.5" stroke="#333" stroke-width=".45"/><path d="M1210.9 265.0V277.5" stroke="#333" stroke-width=".45"/><path d="M1217.4 265.0V277.5" stroke="#333" stroke-width=".45"/><rect x="1119.5" y="287.5" width="98.0" height="13.0" fill="#c1c1c1" /><path d="M1119.5 287.5V300.5" stroke="#333" stroke-width=".45"/><path d="M1126.0 287.5V300.5" stroke="#333" stroke-width=".45"/><path d="M1132.6 287.5V300.5" stroke="#333" stroke-width=".45"/><path d="M1139.1 287.5V300.5" stroke="#333" stroke-width=".45"/><path d="M1145.6 287.5V300.5" stroke="#333" stroke-width=".45"/><path d="M1152.1 287.5V300.5" stroke="#333" stroke-width=".45"/><path d="M1158.7 287.5V300.5" stroke="#333" stroke-width=".45"/><path d="M1165.2 287.5V300.5" stroke="#333" stroke-width=".45"/><path d="M1171.7 287.5V300.5" stroke="#333" stroke-width=".45"/><path d="M1178.3 287.5V300.5" stroke="#333" stroke-width=".45"/><path d="M1184.8 287.5V300.5" stroke="#333" stroke-width=".45"/><path d="M1191.3 287.5V300.5" stroke="#333" stroke-width=".45"/><path d="M1197.9 287.5V300.5" stroke="#333" stroke-width=".45"/><path d="M1204.4 287.5V300.5" stroke="#333" stroke-width=".45"/><path d="M1210.9 287.5V300.5" stroke="#333" stroke-width=".45"/><path d="M1217.4 287.5V300.5" stroke="#333" stroke-width=".45"/><rect x="1116.0" y="316.0" width="105.0" height="36.5" fill="#c6dfb9" /><rect x="1116.0" y="329.5" width="105.0" height="4.5" fill="#e3dccb" /><rect x="1116.0" y="357.0" width="105.0" height="36.0" fill="#c6dfb9" /><rect x="1119.5" y="357.0" width="98.0" height="13.5" fill="#c1c1c1" /><path d="M1119.5 357.0V370.5" stroke="#333" stroke-width=".45"/><path d="M1126.0 357.0V370.5" stroke="#333" stroke-width=".45"/><path d="M1132.6 357.0V370.5" stroke="#333" stroke-width=".45"/><path d="M1139.1 357.0V370.5" stroke="#333" stroke-width=".45"/><path d="M1145.6 357.0V370.5" stroke="#333" stroke-width=".45"/><path d="M1152.1 357.0V370.5" stroke="#333" stroke-width=".45"/><path d="M1158.7 357.0V370.5" stroke="#333" stroke-width=".45"/><path d="M1165.2 357.0V370.5" stroke="#333" stroke-width=".45"/><path d="M1171.7 357.0V370.5" stroke="#333" stroke-width=".45"/><path d="M1178.3 357.0V370.5" stroke="#333" stroke-width=".45"/><path d="M1184.8 357.0V370.5" stroke="#333" stroke-width=".45"/><path d="M1191.3 357.0V370.5" stroke="#333" stroke-width=".45"/><path d="M1197.9 357.0V370.5" stroke="#333" stroke-width=".45"/><path d="M1204.4 357.0V370.5" stroke="#333" stroke-width=".45"/><path d="M1210.9 357.0V370.5" stroke="#333" stroke-width=".45"/><path d="M1217.4 357.0V370.5" stroke="#333" stroke-width=".45"/><rect x="1119.5" y="380.0" width="98.0" height="13.0" fill="#c1c1c1" /><path d="M1119.5 380.0V393.0" stroke="#333" stroke-width=".45"/><path d="M1126.0 380.0V393.0" stroke="#333" stroke-width=".45"/><path d="M1132.6 380.0V393.0" stroke="#333" stroke-width=".45"/><path d="M1139.1 380.0V393.0" stroke="#333" stroke-width=".45"/><path d="M1145.6 380.0V393.0" stroke="#333" stroke-width=".45"/><path d="M1152.1 380.0V393.0" stroke="#333" stroke-width=".45"/><path d="M1158.7 380.0V393.0" stroke="#333" stroke-width=".45"/><path d="M1165.2 380.0V393.0" stroke="#333" stroke-width=".45"/><path d="M1171.7 380.0V393.0" stroke="#333" stroke-width=".45"/><path d="M1178.3 380.0V393.0" stroke="#333" stroke-width=".45"/><path d="M1184.8 380.0V393.0" stroke="#333" stroke-width=".45"/><path d="M1191.3 380.0V393.0" stroke="#333" stroke-width=".45"/><path d="M1197.9 380.0V393.0" stroke="#333" stroke-width=".45"/><path d="M1204.4 380.0V393.0" stroke="#333" stroke-width=".45"/><path d="M1210.9 380.0V393.0" stroke="#333" stroke-width=".45"/><path d="M1217.4 380.0V393.0" stroke="#333" stroke-width=".45"/><rect x="1116.0" y="409.0" width="105.0" height="66.5" fill="#c6dfb9" /><rect x="1119.5" y="409.0" width="98.0" height="12.0" fill="#c1c1c1" /><path d="M1119.5 409.0V421.0" stroke="#333" stroke-width=".45"/><path d="M1126.0 409.0V421.0" stroke="#333" stroke-width=".45"/><path d="M1132.6 409.0V421.0" stroke="#333" stroke-width=".45"/><path d="M1139.1 409.0V421.0" stroke="#333" stroke-width=".45"/><path d="M1145.6 409.0V421.0" stroke="#333" stroke-width=".45"/><path d="M1152.1 409.0V421.0" stroke="#333" stroke-width=".45"/><path d="M1158.7 409.0V421.0" stroke="#333" stroke-width=".45"/><path d="M1165.2 409.0V421.0" stroke="#333" stroke-width=".45"/><path d="M1171.7 409.0V421.0" stroke="#333" stroke-width=".45"/><path d="M1178.3 409.0V421.0" stroke="#333" stroke-width=".45"/><path d="M1184.8 409.0V421.0" stroke="#333" stroke-width=".45"/><path d="M1191.3 409.0V421.0" stroke="#333" stroke-width=".45"/><path d="M1197.9 409.0V421.0" stroke="#333" stroke-width=".45"/><path d="M1204.4 409.0V421.0" stroke="#333" stroke-width=".45"/><path d="M1210.9 409.0V421.0" stroke="#333" stroke-width=".45"/><path d="M1217.4 409.0V421.0" stroke="#333" stroke-width=".45"/><circle cx="1124.0" cy="282.5" r="5.0" fill="none" stroke="#4b5a4b" stroke-width=".45"/><path d="M1124.0 282.5 L1128.8 284.0" stroke="#4b5a4b" stroke-width=".3"/><path d="M1124.0 282.5 L1126.3 286.9" stroke="#4b5a4b" stroke-width=".3"/><path d="M1124.0 282.5 L1122.5 287.3" stroke="#4b5a4b" stroke-width=".3"/><path d="M1124.0 282.5 L1119.6 284.8" stroke="#4b5a4b" stroke-width=".3"/><path d="M1124.0 282.5 L1119.2 281.0" stroke="#4b5a4b" stroke-width=".3"/><path d="M1124.0 282.5 L1121.7 278.1" stroke="#4b5a4b" stroke-width=".3"/><path d="M1124.0 282.5 L1125.5 277.7" stroke="#4b5a4b" stroke-width=".3"/><path d="M1124.0 282.5 L1128.4 280.2" stroke="#4b5a4b" stroke-width=".3"/><circle cx="1141.8" cy="282.5" r="5.0" fill="none" stroke="#4b5a4b" stroke-width=".45"/><path d="M1141.8 282.5 L1146.6 284.0" stroke="#4b5a4b" stroke-width=".3"/><path d="M1141.8 282.5 L1144.1 286.9" stroke="#4b5a4b" stroke-width=".3"/><path d="M1141.8 282.5 L1140.3 287.3" stroke="#4b5a4b" stroke-width=".3"/><path d="M1141.8 282.5 L1137.4 284.8" stroke="#4b5a4b" stroke-width=".3"/><path d="M1141.8 282.5 L1137.0 281.0" stroke="#4b5a4b" stroke-width=".3"/><path d="M1141.8 282.5 L1139.5 278.1" stroke="#4b5a4b" stroke-width=".3"/><path d="M1141.8 282.5 L1143.3 277.7" stroke="#4b5a4b" stroke-width=".3"/><path d="M1141.8 282.5 L1146.2 280.2" stroke="#4b5a4b" stroke-width=".3"/><circle cx="1159.6" cy="282.5" r="5.0" fill="none" stroke="#4b5a4b" stroke-width=".45"/><path d="M1159.6 282.5 L1164.4 284.0" stroke="#4b5a4b" stroke-width=".3"/><path d="M1159.6 282.5 L1161.9 286.9" stroke="#4b5a4b" stroke-width=".3"/><path d="M1159.6 282.5 L1158.1 287.3" stroke="#4b5a4b" stroke-width=".3"/><path d="M1159.6 282.5 L1155.2 284.8" stroke="#4b5a4b" stroke-width=".3"/><path d="M1159.6 282.5 L1154.8 281.0" stroke="#4b5a4b" stroke-width=".3"/><path d="M1159.6 282.5 L1157.3 278.1" stroke="#4b5a4b" stroke-width=".3"/><path d="M1159.6 282.5 L1161.1 277.7" stroke="#4b5a4b" stroke-width=".3"/><path d="M1159.6 282.5 L1164.0 280.2" stroke="#4b5a4b" stroke-width=".3"/><circle cx="1177.4" cy="282.5" r="5.0" fill="none" stroke="#4b5a4b" stroke-width=".45"/><path d="M1177.4 282.5 L1182.2 284.0" stroke="#4b5a4b" stroke-width=".3"/><path d="M1177.4 282.5 L1179.7 286.9" stroke="#4b5a4b" stroke-width=".3"/><path d="M1177.4 282.5 L1175.9 287.3" stroke="#4b5a4b" stroke-width=".3"/><path d="M1177.4 282.5 L1173.0 284.8" stroke="#4b5a4b" stroke-width=".3"/><path d="M1177.4 282.5 L1172.6 281.0" stroke="#4b5a4b" stroke-width=".3"/><path d="M1177.4 282.5 L1175.1 278.1" stroke="#4b5a4b" stroke-width=".3"/><path d="M1177.4 282.5 L1178.9 277.7" stroke="#4b5a4b" stroke-width=".3"/><path d="M1177.4 282.5 L1181.8 280.2" stroke="#4b5a4b" stroke-width=".3"/><circle cx="1195.2" cy="282.5" r="5.0" fill="none" stroke="#4b5a4b" stroke-width=".45"/><path d="M1195.2 282.5 L1200.0 284.0" stroke="#4b5a4b" stroke-width=".3"/><path d="M1195.2 282.5 L1197.5 286.9" stroke="#4b5a4b" stroke-width=".3"/><path d="M1195.2 282.5 L1193.7 287.3" stroke="#4b5a4b" stroke-width=".3"/><path d="M1195.2 282.5 L1190.8 284.8" stroke="#4b5a4b" stroke-width=".3"/><path d="M1195.2 282.5 L1190.4 281.0" stroke="#4b5a4b" stroke-width=".3"/><path d="M1195.2 282.5 L1192.9 278.1" stroke="#4b5a4b" stroke-width=".3"/><path d="M1195.2 282.5 L1196.7 277.7" stroke="#4b5a4b" stroke-width=".3"/><path d="M1195.2 282.5 L1199.6 280.2" stroke="#4b5a4b" stroke-width=".3"/><circle cx="1213.0" cy="282.5" r="5.0" fill="none" stroke="#4b5a4b" stroke-width=".45"/><path d="M1213.0 282.5 L1217.8 284.0" stroke="#4b5a4b" stroke-width=".3"/><path d="M1213.0 282.5 L1215.3 286.9" stroke="#4b5a4b" stroke-width=".3"/><path d="M1213.0 282.5 L1211.5 287.3" stroke="#4b5a4b" stroke-width=".3"/><path d="M1213.0 282.5 L1208.6 284.8" stroke="#4b5a4b" stroke-width=".3"/><path d="M1213.0 282.5 L1208.2 281.0" stroke="#4b5a4b" stroke-width=".3"/><path d="M1213.0 282.5 L1210.7 278.1" stroke="#4b5a4b" stroke-width=".3"/><path d="M1213.0 282.5 L1214.5 277.7" stroke="#4b5a4b" stroke-width=".3"/><path d="M1213.0 282.5 L1217.4 280.2" stroke="#4b5a4b" stroke-width=".3"/><circle cx="1124.0" cy="322.0" r="5.0" fill="none" stroke="#4b5a4b" stroke-width=".45"/><path d="M1124.0 322.0 L1128.8 323.5" stroke="#4b5a4b" stroke-width=".3"/><path d="M1124.0 322.0 L1126.3 326.4" stroke="#4b5a4b" stroke-width=".3"/><path d="M1124.0 322.0 L1122.5 326.8" stroke="#4b5a4b" stroke-width=".3"/><path d="M1124.0 322.0 L1119.6 324.3" stroke="#4b5a4b" stroke-width=".3"/><path d="M1124.0 322.0 L1119.2 320.5" stroke="#4b5a4b" stroke-width=".3"/><path d="M1124.0 322.0 L1121.7 317.6" stroke="#4b5a4b" stroke-width=".3"/><path d="M1124.0 322.0 L1125.5 317.2" stroke="#4b5a4b" stroke-width=".3"/><path d="M1124.0 322.0 L1128.4 319.7" stroke="#4b5a4b" stroke-width=".3"/><circle cx="1141.8" cy="322.0" r="5.0" fill="none" stroke="#4b5a4b" stroke-width=".45"/><path d="M1141.8 322.0 L1146.6 323.5" stroke="#4b5a4b" stroke-width=".3"/><path d="M1141.8 322.0 L1144.1 326.4" stroke="#4b5a4b" stroke-width=".3"/><path d="M1141.8 322.0 L1140.3 326.8" stroke="#4b5a4b" stroke-width=".3"/><path d="M1141.8 322.0 L1137.4 324.3" stroke="#4b5a4b" stroke-width=".3"/><path d="M1141.8 322.0 L1137.0 320.5" stroke="#4b5a4b" stroke-width=".3"/><path d="M1141.8 322.0 L1139.5 317.6" stroke="#4b5a4b" stroke-width=".3"/><path d="M1141.8 322.0 L1143.3 317.2" stroke="#4b5a4b" stroke-width=".3"/><path d="M1141.8 322.0 L1146.2 319.7" stroke="#4b5a4b" stroke-width=".3"/><circle cx="1159.6" cy="322.0" r="5.0" fill="none" stroke="#4b5a4b" stroke-width=".45"/><path d="M1159.6 322.0 L1164.4 323.5" stroke="#4b5a4b" stroke-width=".3"/><path d="M1159.6 322.0 L1161.9 326.4" stroke="#4b5a4b" stroke-width=".3"/><path d="M1159.6 322.0 L1158.1 326.8" stroke="#4b5a4b" stroke-width=".3"/><path d="M1159.6 322.0 L1155.2 324.3" stroke="#4b5a4b" stroke-width=".3"/><path d="M1159.6 322.0 L1154.8 320.5" stroke="#4b5a4b" stroke-width=".3"/><path d="M1159.6 322.0 L1157.3 317.6" stroke="#4b5a4b" stroke-width=".3"/><path d="M1159.6 322.0 L1161.1 317.2" stroke="#4b5a4b" stroke-width=".3"/><path d="M1159.6 322.0 L1164.0 319.7" stroke="#4b5a4b" stroke-width=".3"/><circle cx="1177.4" cy="322.0" r="5.0" fill="none" stroke="#4b5a4b" stroke-width=".45"/><path d="M1177.4 322.0 L1182.2 323.5" stroke="#4b5a4b" stroke-width=".3"/><path d="M1177.4 322.0 L1179.7 326.4" stroke="#4b5a4b" stroke-width=".3"/><path d="M1177.4 322.0 L1175.9 326.8" stroke="#4b5a4b" stroke-width=".3"/><path d="M1177.4 322.0 L1173.0 324.3" stroke="#4b5a4b" stroke-width=".3"/><path d="M1177.4 322.0 L1172.6 320.5" stroke="#4b5a4b" stroke-width=".3"/><path d="M1177.4 322.0 L1175.1 317.6" stroke="#4b5a4b" stroke-width=".3"/><path d="M1177.4 322.0 L1178.9 317.2" stroke="#4b5a4b" stroke-width=".3"/><path d="M1177.4 322.0 L1181.8 319.7" stroke="#4b5a4b" stroke-width=".3"/><circle cx="1195.2" cy="322.0" r="5.0" fill="none" stroke="#4b5a4b" stroke-width=".45"/><path d="M1195.2 322.0 L1200.0 323.5" stroke="#4b5a4b" stroke-width=".3"/><path d="M1195.2 322.0 L1197.5 326.4" stroke="#4b5a4b" stroke-width=".3"/><path d="M1195.2 322.0 L1193.7 326.8" stroke="#4b5a4b" stroke-width=".3"/><path d="M1195.2 322.0 L1190.8 324.3" stroke="#4b5a4b" stroke-width=".3"/><path d="M1195.2 322.0 L1190.4 320.5" stroke="#4b5a4b" stroke-width=".3"/><path d="M1195.2 322.0 L1192.9 317.6" stroke="#4b5a4b" stroke-width=".3"/><path d="M1195.2 322.0 L1196.7 317.2" stroke="#4b5a4b" stroke-width=".3"/><path d="M1195.2 322.0 L1199.6 319.7" stroke="#4b5a4b" stroke-width=".3"/><circle cx="1213.0" cy="322.0" r="5.0" fill="none" stroke="#4b5a4b" stroke-width=".45"/><path d="M1213.0 322.0 L1217.8 323.5" stroke="#4b5a4b" stroke-width=".3"/><path d="M1213.0 322.0 L1215.3 326.4" stroke="#4b5a4b" stroke-width=".3"/><path d="M1213.0 322.0 L1211.5 326.8" stroke="#4b5a4b" stroke-width=".3"/><path d="M1213.0 322.0 L1208.6 324.3" stroke="#4b5a4b" stroke-width=".3"/><path d="M1213.0 322.0 L1208.2 320.5" stroke="#4b5a4b" stroke-width=".3"/><path d="M1213.0 322.0 L1210.7 317.6" stroke="#4b5a4b" stroke-width=".3"/><path d="M1213.0 322.0 L1214.5 317.2" stroke="#4b5a4b" stroke-width=".3"/><path d="M1213.0 322.0 L1217.4 319.7" stroke="#4b5a4b" stroke-width=".3"/><circle cx="1124.0" cy="341.5" r="5.0" fill="none" stroke="#4b5a4b" stroke-width=".45"/><path d="M1124.0 341.5 L1128.8 343.0" stroke="#4b5a4b" stroke-width=".3"/><path d="M1124.0 341.5 L1126.3 345.9" stroke="#4b5a4b" stroke-width=".3"/><path d="M1124.0 341.5 L1122.5 346.3" stroke="#4b5a4b" stroke-width=".3"/><path d="M1124.0 341.5 L1119.6 343.8" stroke="#4b5a4b" stroke-width=".3"/><path d="M1124.0 341.5 L1119.2 340.0" stroke="#4b5a4b" stroke-width=".3"/><path d="M1124.0 341.5 L1121.7 337.1" stroke="#4b5a4b" stroke-width=".3"/><path d="M1124.0 341.5 L1125.5 336.7" stroke="#4b5a4b" stroke-width=".3"/><path d="M1124.0 341.5 L1128.4 339.2" stroke="#4b5a4b" stroke-width=".3"/><circle cx="1141.8" cy="341.5" r="5.0" fill="none" stroke="#4b5a4b" stroke-width=".45"/><path d="M1141.8 341.5 L1146.6 343.0" stroke="#4b5a4b" stroke-width=".3"/><path d="M1141.8 341.5 L1144.1 345.9" stroke="#4b5a4b" stroke-width=".3"/><path d="M1141.8 341.5 L1140.3 346.3" stroke="#4b5a4b" stroke-width=".3"/><path d="M1141.8 341.5 L1137.4 343.8" stroke="#4b5a4b" stroke-width=".3"/><path d="M1141.8 341.5 L1137.0 340.0" stroke="#4b5a4b" stroke-width=".3"/><path d="M1141.8 341.5 L1139.5 337.1" stroke="#4b5a4b" stroke-width=".3"/><path d="M1141.8 341.5 L1143.3 336.7" stroke="#4b5a4b" stroke-width=".3"/><path d="M1141.8 341.5 L1146.2 339.2" stroke="#4b5a4b" stroke-width=".3"/><circle cx="1159.6" cy="341.5" r="5.0" fill="none" stroke="#4b5a4b" stroke-width=".45"/><path d="M1159.6 341.5 L1164.4 343.0" stroke="#4b5a4b" stroke-width=".3"/><path d="M1159.6 341.5 L1161.9 345.9" stroke="#4b5a4b" stroke-width=".3"/><path d="M1159.6 341.5 L1158.1 346.3" stroke="#4b5a4b" stroke-width=".3"/><path d="M1159.6 341.5 L1155.2 343.8" stroke="#4b5a4b" stroke-width=".3"/><path d="M1159.6 341.5 L1154.8 340.0" stroke="#4b5a4b" stroke-width=".3"/><path d="M1159.6 341.5 L1157.3 337.1" stroke="#4b5a4b" stroke-width=".3"/><path d="M1159.6 341.5 L1161.1 336.7" stroke="#4b5a4b" stroke-width=".3"/><path d="M1159.6 341.5 L1164.0 339.2" stroke="#4b5a4b" stroke-width=".3"/><circle cx="1177.4" cy="341.5" r="5.0" fill="none" stroke="#4b5a4b" stroke-width=".45"/><path d="M1177.4 341.5 L1182.2 343.0" stroke="#4b5a4b" stroke-width=".3"/><path d="M1177.4 341.5 L1179.7 345.9" stroke="#4b5a4b" stroke-width=".3"/><path d="M1177.4 341.5 L1175.9 346.3" stroke="#4b5a4b" stroke-width=".3"/><path d="M1177.4 341.5 L1173.0 343.8" stroke="#4b5a4b" stroke-width=".3"/><path d="M1177.4 341.5 L1172.6 340.0" stroke="#4b5a4b" stroke-width=".3"/><path d="M1177.4 341.5 L1175.1 337.1" stroke="#4b5a4b" stroke-width=".3"/><path d="M1177.4 341.5 L1178.9 336.7" stroke="#4b5a4b" stroke-width=".3"/><path d="M1177.4 341.5 L1181.8 339.2" stroke="#4b5a4b" stroke-width=".3"/><circle cx="1195.2" cy="341.5" r="5.0" fill="none" stroke="#4b5a4b" stroke-width=".45"/><path d="M1195.2 341.5 L1200.0 343.0" stroke="#4b5a4b" stroke-width=".3"/><path d="M1195.2 341.5 L1197.5 345.9" stroke="#4b5a4b" stroke-width=".3"/><path d="M1195.2 341.5 L1193.7 346.3" stroke="#4b5a4b" stroke-width=".3"/><path d="M1195.2 341.5 L1190.8 343.8" stroke="#4b5a4b" stroke-width=".3"/><path d="M1195.2 341.5 L1190.4 340.0" stroke="#4b5a4b" stroke-width=".3"/><path d="M1195.2 341.5 L1192.9 337.1" stroke="#4b5a4b" stroke-width=".3"/><path d="M1195.2 341.5 L1196.7 336.7" stroke="#4b5a4b" stroke-width=".3"/><path d="M1195.2 341.5 L1199.6 339.2" stroke="#4b5a4b" stroke-width=".3"/><circle cx="1213.0" cy="341.5" r="5.0" fill="none" stroke="#4b5a4b" stroke-width=".45"/><path d="M1213.0 341.5 L1217.8 343.0" stroke="#4b5a4b" stroke-width=".3"/><path d="M1213.0 341.5 L1215.3 345.9" stroke="#4b5a4b" stroke-width=".3"/><path d="M1213.0 341.5 L1211.5 346.3" stroke="#4b5a4b" stroke-width=".3"/><path d="M1213.0 341.5 L1208.6 343.8" stroke="#4b5a4b" stroke-width=".3"/><path d="M1213.0 341.5 L1208.2 340.0" stroke="#4b5a4b" stroke-width=".3"/><path d="M1213.0 341.5 L1210.7 337.1" stroke="#4b5a4b" stroke-width=".3"/><path d="M1213.0 341.5 L1214.5 336.7" stroke="#4b5a4b" stroke-width=".3"/><path d="M1213.0 341.5 L1217.4 339.2" stroke="#4b5a4b" stroke-width=".3"/><circle cx="1124.0" cy="375.0" r="5.0" fill="none" stroke="#4b5a4b" stroke-width=".45"/><path d="M1124.0 375.0 L1128.8 376.5" stroke="#4b5a4b" stroke-width=".3"/><path d="M1124.0 375.0 L1126.3 379.4" stroke="#4b5a4b" stroke-width=".3"/><path d="M1124.0 375.0 L1122.5 379.8" stroke="#4b5a4b" stroke-width=".3"/><path d="M1124.0 375.0 L1119.6 377.3" stroke="#4b5a4b" stroke-width=".3"/><path d="M1124.0 375.0 L1119.2 373.5" stroke="#4b5a4b" stroke-width=".3"/><path d="M1124.0 375.0 L1121.7 370.6" stroke="#4b5a4b" stroke-width=".3"/><path d="M1124.0 375.0 L1125.5 370.2" stroke="#4b5a4b" stroke-width=".3"/><path d="M1124.0 375.0 L1128.4 372.7" stroke="#4b5a4b" stroke-width=".3"/><circle cx="1141.8" cy="375.0" r="5.0" fill="none" stroke="#4b5a4b" stroke-width=".45"/><path d="M1141.8 375.0 L1146.6 376.5" stroke="#4b5a4b" stroke-width=".3"/><path d="M1141.8 375.0 L1144.1 379.4" stroke="#4b5a4b" stroke-width=".3"/><path d="M1141.8 375.0 L1140.3 379.8" stroke="#4b5a4b" stroke-width=".3"/><path d="M1141.8 375.0 L1137.4 377.3" stroke="#4b5a4b" stroke-width=".3"/><path d="M1141.8 375.0 L1137.0 373.5" stroke="#4b5a4b" stroke-width=".3"/><path d="M1141.8 375.0 L1139.5 370.6" stroke="#4b5a4b" stroke-width=".3"/><path d="M1141.8 375.0 L1143.3 370.2" stroke="#4b5a4b" stroke-width=".3"/><path d="M1141.8 375.0 L1146.2 372.7" stroke="#4b5a4b" stroke-width=".3"/><circle cx="1159.6" cy="375.0" r="5.0" fill="none" stroke="#4b5a4b" stroke-width=".45"/><path d="M1159.6 375.0 L1164.4 376.5" stroke="#4b5a4b" stroke-width=".3"/><path d="M1159.6 375.0 L1161.9 379.4" stroke="#4b5a4b" stroke-width=".3"/><path d="M1159.6 375.0 L1158.1 379.8" stroke="#4b5a4b" stroke-width=".3"/><path d="M1159.6 375.0 L1155.2 377.3" stroke="#4b5a4b" stroke-width=".3"/><path d="M1159.6 375.0 L1154.8 373.5" stroke="#4b5a4b" stroke-width=".3"/><path d="M1159.6 375.0 L1157.3 370.6" stroke="#4b5a4b" stroke-width=".3"/><path d="M1159.6 375.0 L1161.1 370.2" stroke="#4b5a4b" stroke-width=".3"/><path d="M1159.6 375.0 L1164.0 372.7" stroke="#4b5a4b" stroke-width=".3"/><circle cx="1177.4" cy="375.0" r="5.0" fill="none" stroke="#4b5a4b" stroke-width=".45"/><path d="M1177.4 375.0 L1182.2 376.5" stroke="#4b5a4b" stroke-width=".3"/><path d="M1177.4 375.0 L1179.7 379.4" stroke="#4b5a4b" stroke-width=".3"/><path d="M1177.4 375.0 L1175.9 379.8" stroke="#4b5a4b" stroke-width=".3"/><path d="M1177.4 375.0 L1173.0 377.3" stroke="#4b5a4b" stroke-width=".3"/><path d="M1177.4 375.0 L1172.6 373.5" stroke="#4b5a4b" stroke-width=".3"/><path d="M1177.4 375.0 L1175.1 370.6" stroke="#4b5a4b" stroke-width=".3"/><path d="M1177.4 375.0 L1178.9 370.2" stroke="#4b5a4b" stroke-width=".3"/><path d="M1177.4 375.0 L1181.8 372.7" stroke="#4b5a4b" stroke-width=".3"/><circle cx="1195.2" cy="375.0" r="5.0" fill="none" stroke="#4b5a4b" stroke-width=".45"/><path d="M1195.2 375.0 L1200.0 376.5" stroke="#4b5a4b" stroke-width=".3"/><path d="M1195.2 375.0 L1197.5 379.4" stroke="#4b5a4b" stroke-width=".3"/><path d="M1195.2 375.0 L1193.7 379.8" stroke="#4b5a4b" stroke-width=".3"/><path d="M1195.2 375.0 L1190.8 377.3" stroke="#4b5a4b" stroke-width=".3"/><path d="M1195.2 375.0 L1190.4 373.5" stroke="#4b5a4b" stroke-width=".3"/><path d="M1195.2 375.0 L1192.9 370.6" stroke="#4b5a4b" stroke-width=".3"/><path d="M1195.2 375.0 L1196.7 370.2" stroke="#4b5a4b" stroke-width=".3"/><path d="M1195.2 375.0 L1199.6 372.7" stroke="#4b5a4b" stroke-width=".3"/><circle cx="1213.0" cy="375.0" r="5.0" fill="none" stroke="#4b5a4b" stroke-width=".45"/><path d="M1213.0 375.0 L1217.8 376.5" stroke="#4b5a4b" stroke-width=".3"/><path d="M1213.0 375.0 L1215.3 379.4" stroke="#4b5a4b" stroke-width=".3"/><path d="M1213.0 375.0 L1211.5 379.8" stroke="#4b5a4b" stroke-width=".3"/><path d="M1213.0 375.0 L1208.6 377.3" stroke="#4b5a4b" stroke-width=".3"/><path d="M1213.0 375.0 L1208.2 373.5" stroke="#4b5a4b" stroke-width=".3"/><path d="M1213.0 375.0 L1210.7 370.6" stroke="#4b5a4b" stroke-width=".3"/><path d="M1213.0 375.0 L1214.5 370.2" stroke="#4b5a4b" stroke-width=".3"/><path d="M1213.0 375.0 L1217.4 372.7" stroke="#4b5a4b" stroke-width=".3"/><circle cx="1124.0" cy="430.0" r="5.5" fill="none" stroke="#4b5a4b" stroke-width=".45"/><path d="M1124.0 430.0 L1129.3 431.6" stroke="#4b5a4b" stroke-width=".3"/><path d="M1124.0 430.0 L1126.6 434.9" stroke="#4b5a4b" stroke-width=".3"/><path d="M1124.0 430.0 L1122.4 435.3" stroke="#4b5a4b" stroke-width=".3"/><path d="M1124.0 430.0 L1119.1 432.6" stroke="#4b5a4b" stroke-width=".3"/><path d="M1124.0 430.0 L1118.7 428.4" stroke="#4b5a4b" stroke-width=".3"/><path d="M1124.0 430.0 L1121.4 425.1" stroke="#4b5a4b" stroke-width=".3"/><path d="M1124.0 430.0 L1125.6 424.7" stroke="#4b5a4b" stroke-width=".3"/><path d="M1124.0 430.0 L1128.9 427.4" stroke="#4b5a4b" stroke-width=".3"/><circle cx="1141.8" cy="433.0" r="5.5" fill="none" stroke="#4b5a4b" stroke-width=".45"/><path d="M1141.8 433.0 L1147.1 434.6" stroke="#4b5a4b" stroke-width=".3"/><path d="M1141.8 433.0 L1144.4 437.9" stroke="#4b5a4b" stroke-width=".3"/><path d="M1141.8 433.0 L1140.2 438.3" stroke="#4b5a4b" stroke-width=".3"/><path d="M1141.8 433.0 L1136.9 435.6" stroke="#4b5a4b" stroke-width=".3"/><path d="M1141.8 433.0 L1136.5 431.4" stroke="#4b5a4b" stroke-width=".3"/><path d="M1141.8 433.0 L1139.2 428.1" stroke="#4b5a4b" stroke-width=".3"/><path d="M1141.8 433.0 L1143.4 427.7" stroke="#4b5a4b" stroke-width=".3"/><path d="M1141.8 433.0 L1146.7 430.4" stroke="#4b5a4b" stroke-width=".3"/><circle cx="1159.6" cy="430.0" r="5.5" fill="none" stroke="#4b5a4b" stroke-width=".45"/><path d="M1159.6 430.0 L1164.9 431.6" stroke="#4b5a4b" stroke-width=".3"/><path d="M1159.6 430.0 L1162.2 434.9" stroke="#4b5a4b" stroke-width=".3"/><path d="M1159.6 430.0 L1158.0 435.3" stroke="#4b5a4b" stroke-width=".3"/><path d="M1159.6 430.0 L1154.7 432.6" stroke="#4b5a4b" stroke-width=".3"/><path d="M1159.6 430.0 L1154.3 428.4" stroke="#4b5a4b" stroke-width=".3"/><path d="M1159.6 430.0 L1157.0 425.1" stroke="#4b5a4b" stroke-width=".3"/><path d="M1159.6 430.0 L1161.2 424.7" stroke="#4b5a4b" stroke-width=".3"/><path d="M1159.6 430.0 L1164.5 427.4" stroke="#4b5a4b" stroke-width=".3"/><circle cx="1177.4" cy="433.0" r="5.5" fill="none" stroke="#4b5a4b" stroke-width=".45"/><path d="M1177.4 433.0 L1182.7 434.6" stroke="#4b5a4b" stroke-width=".3"/><path d="M1177.4 433.0 L1180.0 437.9" stroke="#4b5a4b" stroke-width=".3"/><path d="M1177.4 433.0 L1175.8 438.3" stroke="#4b5a4b" stroke-width=".3"/><path d="M1177.4 433.0 L1172.5 435.6" stroke="#4b5a4b" stroke-width=".3"/><path d="M1177.4 433.0 L1172.1 431.4" stroke="#4b5a4b" stroke-width=".3"/><path d="M1177.4 433.0 L1174.8 428.1" stroke="#4b5a4b" stroke-width=".3"/><path d="M1177.4 433.0 L1179.0 427.7" stroke="#4b5a4b" stroke-width=".3"/><path d="M1177.4 433.0 L1182.3 430.4" stroke="#4b5a4b" stroke-width=".3"/><circle cx="1195.2" cy="430.0" r="5.5" fill="none" stroke="#4b5a4b" stroke-width=".45"/><path d="M1195.2 430.0 L1200.5 431.6" stroke="#4b5a4b" stroke-width=".3"/><path d="M1195.2 430.0 L1197.8 434.9" stroke="#4b5a4b" stroke-width=".3"/><path d="M1195.2 430.0 L1193.6 435.3" stroke="#4b5a4b" stroke-width=".3"/><path d="M1195.2 430.0 L1190.3 432.6" stroke="#4b5a4b" stroke-width=".3"/><path d="M1195.2 430.0 L1189.9 428.4" stroke="#4b5a4b" stroke-width=".3"/><path d="M1195.2 430.0 L1192.6 425.1" stroke="#4b5a4b" stroke-width=".3"/><path d="M1195.2 430.0 L1196.8 424.7" stroke="#4b5a4b" stroke-width=".3"/><path d="M1195.2 430.0 L1200.1 427.4" stroke="#4b5a4b" stroke-width=".3"/><circle cx="1213.0" cy="433.0" r="5.5" fill="none" stroke="#4b5a4b" stroke-width=".45"/><path d="M1213.0 433.0 L1218.3 434.6" stroke="#4b5a4b" stroke-width=".3"/><path d="M1213.0 433.0 L1215.6 437.9" stroke="#4b5a4b" stroke-width=".3"/><path d="M1213.0 433.0 L1211.4 438.3" stroke="#4b5a4b" stroke-width=".3"/><path d="M1213.0 433.0 L1208.1 435.6" stroke="#4b5a4b" stroke-width=".3"/><path d="M1213.0 433.0 L1207.7 431.4" stroke="#4b5a4b" stroke-width=".3"/><path d="M1213.0 433.0 L1210.4 428.1" stroke="#4b5a4b" stroke-width=".3"/><path d="M1213.0 433.0 L1214.6 427.7" stroke="#4b5a4b" stroke-width=".3"/><path d="M1213.0 433.0 L1217.9 430.4" stroke="#4b5a4b" stroke-width=".3"/><circle cx="1129.0" cy="465.0" r="8.0" fill="none" stroke="#4b5a4b" stroke-width=".45"/><path d="M1129.0 465.0 L1136.6 467.4" stroke="#4b5a4b" stroke-width=".3"/><path d="M1129.0 465.0 L1132.7 472.1" stroke="#4b5a4b" stroke-width=".3"/><path d="M1129.0 465.0 L1126.6 472.6" stroke="#4b5a4b" stroke-width=".3"/><path d="M1129.0 465.0 L1121.9 468.7" stroke="#4b5a4b" stroke-width=".3"/><path d="M1129.0 465.0 L1121.4 462.6" stroke="#4b5a4b" stroke-width=".3"/><path d="M1129.0 465.0 L1125.3 457.9" stroke="#4b5a4b" stroke-width=".3"/><path d="M1129.0 465.0 L1131.4 457.4" stroke="#4b5a4b" stroke-width=".3"/><path d="M1129.0 465.0 L1136.1 461.3" stroke="#4b5a4b" stroke-width=".3"/><circle cx="1157.0" cy="466.0" r="11.0" fill="none" stroke="#4b5a4b" stroke-width=".45"/><path d="M1157.0 466.0 L1167.5 469.3" stroke="#4b5a4b" stroke-width=".3"/><path d="M1157.0 466.0 L1162.1 475.7" stroke="#4b5a4b" stroke-width=".3"/><path d="M1157.0 466.0 L1153.7 476.5" stroke="#4b5a4b" stroke-width=".3"/><path d="M1157.0 466.0 L1147.3 471.1" stroke="#4b5a4b" stroke-width=".3"/><path d="M1157.0 466.0 L1146.5 462.7" stroke="#4b5a4b" stroke-width=".3"/><path d="M1157.0 466.0 L1151.9 456.3" stroke="#4b5a4b" stroke-width=".3"/><path d="M1157.0 466.0 L1160.3 455.5" stroke="#4b5a4b" stroke-width=".3"/><path d="M1157.0 466.0 L1166.7 460.9" stroke="#4b5a4b" stroke-width=".3"/><circle cx="1187.0" cy="466.0" r="8.0" fill="none" stroke="#4b5a4b" stroke-width=".45"/><path d="M1187.0 466.0 L1194.6 468.4" stroke="#4b5a4b" stroke-width=".3"/><path d="M1187.0 466.0 L1190.7 473.1" stroke="#4b5a4b" stroke-width=".3"/><path d="M1187.0 466.0 L1184.6 473.6" stroke="#4b5a4b" stroke-width=".3"/><path d="M1187.0 466.0 L1179.9 469.7" stroke="#4b5a4b" stroke-width=".3"/><path d="M1187.0 466.0 L1179.4 463.6" stroke="#4b5a4b" stroke-width=".3"/><path d="M1187.0 466.0 L1183.3 458.9" stroke="#4b5a4b" stroke-width=".3"/><path d="M1187.0 466.0 L1189.4 458.4" stroke="#4b5a4b" stroke-width=".3"/><path d="M1187.0 466.0 L1194.1 462.3" stroke="#4b5a4b" stroke-width=".3"/><circle cx="1208.0" cy="463.0" r="6.0" fill="none" stroke="#4b5a4b" stroke-width=".45"/><path d="M1208.0 463.0 L1213.7 464.8" stroke="#4b5a4b" stroke-width=".3"/><path d="M1208.0 463.0 L1210.8 468.3" stroke="#4b5a4b" stroke-width=".3"/><path d="M1208.0 463.0 L1206.2 468.7" stroke="#4b5a4b" stroke-width=".3"/><path d="M1208.0 463.0 L1202.7 465.8" stroke="#4b5a4b" stroke-width=".3"/><path d="M1208.0 463.0 L1202.3 461.2" stroke="#4b5a4b" stroke-width=".3"/><path d="M1208.0 463.0 L1205.2 457.7" stroke="#4b5a4b" stroke-width=".3"/><path d="M1208.0 463.0 L1209.8 457.3" stroke="#4b5a4b" stroke-width=".3"/><path d="M1208.0 463.0 L1213.3 460.2" stroke="#4b5a4b" stroke-width=".3"/><circle cx="1203.0" cy="447.0" r="8.0" fill="none" stroke="#4b5a4b" stroke-width=".45"/><path d="M1203.0 447.0 L1210.6 449.4" stroke="#4b5a4b" stroke-width=".3"/><path d="M1203.0 447.0 L1206.7 454.1" stroke="#4b5a4b" stroke-width=".3"/><path d="M1203.0 447.0 L1200.6 454.6" stroke="#4b5a4b" stroke-width=".3"/><path d="M1203.0 447.0 L1195.9 450.7" stroke="#4b5a4b" stroke-width=".3"/><path d="M1203.0 447.0 L1195.4 444.6" stroke="#4b5a4b" stroke-width=".3"/><path d="M1203.0 447.0 L1199.3 439.9" stroke="#4b5a4b" stroke-width=".3"/><path d="M1203.0 447.0 L1205.4 439.4" stroke="#4b5a4b" stroke-width=".3"/><path d="M1203.0 447.0 L1210.1 443.3" stroke="#4b5a4b" stroke-width=".3"/><circle cx="1128.0" cy="440.0" r="9.0" fill="none" stroke="#4b5a4b" stroke-width=".45"/><path d="M1128.0 440.0 L1136.6 442.7" stroke="#4b5a4b" stroke-width=".3"/><path d="M1128.0 440.0 L1132.2 448.0" stroke="#4b5a4b" stroke-width=".3"/><path d="M1128.0 440.0 L1125.3 448.6" stroke="#4b5a4b" stroke-width=".3"/><path d="M1128.0 440.0 L1120.0 444.2" stroke="#4b5a4b" stroke-width=".3"/><path d="M1128.0 440.0 L1119.4 437.3" stroke="#4b5a4b" stroke-width=".3"/><path d="M1128.0 440.0 L1123.8 432.0" stroke="#4b5a4b" stroke-width=".3"/><path d="M1128.0 440.0 L1130.7 431.4" stroke="#4b5a4b" stroke-width=".3"/><path d="M1128.0 440.0 L1136.0 435.8" stroke="#4b5a4b" stroke-width=".3"/><circle cx="1119.0" cy="424.0" r="6.0" fill="none" stroke="#4b5a4b" stroke-width=".45"/><path d="M1119.0 424.0 L1124.7 425.8" stroke="#4b5a4b" stroke-width=".3"/><path d="M1119.0 424.0 L1121.8 429.3" stroke="#4b5a4b" stroke-width=".3"/><path d="M1119.0 424.0 L1117.2 429.7" stroke="#4b5a4b" stroke-width=".3"/><path d="M1119.0 424.0 L1113.7 426.8" stroke="#4b5a4b" stroke-width=".3"/><path d="M1119.0 424.0 L1113.3 422.2" stroke="#4b5a4b" stroke-width=".3"/><path d="M1119.0 424.0 L1116.2 418.7" stroke="#4b5a4b" stroke-width=".3"/><path d="M1119.0 424.0 L1120.8 418.3" stroke="#4b5a4b" stroke-width=".3"/><path d="M1119.0 424.0 L1124.3 421.2" stroke="#4b5a4b" stroke-width=".3"/><path d="M1234.5 213 V331 M1234.5 331 C1275 331 1310 329 1345 322" stroke="#e3dccb" stroke-width="2.4" fill="none"/><path d="M1236 213 V329.6 C1275 329.6 1310 327.6 1345 320.6" stroke="#9a9a8a" stroke-width=".4" fill="none"/><path d="M1236 339 H1345 M1236 371 H1345 M1244 403 H1345 M1244 403 V449 H1345 M1270 395 V363 H1345 M1295 363 V395 H1270 M1268 300 V325 M1268 300 C1275 292 1290 292 1296 300 V328" stroke="#6f8a6a" stroke-width=".4" stroke-dasharray="3 1.6" fill="none"/><circle cx="1278.5" cy="257.0" r="4.5" fill="none" stroke="#4b5a4b" stroke-width=".45"/><path d="M1278.5 257.0 L1282.8 258.3" stroke="#4b5a4b" stroke-width=".3"/><path d="M1278.5 257.0 L1280.6 261.0" stroke="#4b5a4b" stroke-width=".3"/><path d="M1278.5 257.0 L1277.2 261.3" stroke="#4b5a4b" stroke-width=".3"/><path d="M1278.5 257.0 L1274.5 259.1" stroke="#4b5a4b" stroke-width=".3"/><path d="M1278.5 257.0 L1274.2 255.7" stroke="#4b5a4b" stroke-width=".3"/><path d="M1278.5 257.0 L1276.4 253.0" stroke="#4b5a4b" stroke-width=".3"/><path d="M1278.5 257.0 L1279.8 252.7" stroke="#4b5a4b" stroke-width=".3"/><path d="M1278.5 257.0 L1282.5 254.9" stroke="#4b5a4b" stroke-width=".3"/><circle cx="1311.0" cy="290.0" r="6.5" fill="none" stroke="#4b5a4b" stroke-width=".45"/><path d="M1311.0 290.0 L1317.2 291.9" stroke="#4b5a4b" stroke-width=".3"/><path d="M1311.0 290.0 L1314.0 295.7" stroke="#4b5a4b" stroke-width=".3"/><path d="M1311.0 290.0 L1309.1 296.2" stroke="#4b5a4b" stroke-width=".3"/><path d="M1311.0 290.0 L1305.3 293.0" stroke="#4b5a4b" stroke-width=".3"/><path d="M1311.0 290.0 L1304.8 288.1" stroke="#4b5a4b" stroke-width=".3"/><path d="M1311.0 290.0 L1308.0 284.3" stroke="#4b5a4b" stroke-width=".3"/><path d="M1311.0 290.0 L1312.9 283.8" stroke="#4b5a4b" stroke-width=".3"/><path d="M1311.0 290.0 L1316.7 287.0" stroke="#4b5a4b" stroke-width=".3"/><circle cx="1240.0" cy="447.0" r="13.0" fill="none" stroke="#4b5a4b" stroke-width=".45"/><path d="M1240.0 447.0 L1252.4 450.8" stroke="#4b5a4b" stroke-width=".3"/><path d="M1240.0 447.0 L1246.1 458.5" stroke="#4b5a4b" stroke-width=".3"/><path d="M1240.0 447.0 L1236.2 459.4" stroke="#4b5a4b" stroke-width=".3"/><path d="M1240.0 447.0 L1228.5 453.1" stroke="#4b5a4b" stroke-width=".3"/><path d="M1240.0 447.0 L1227.6 443.2" stroke="#4b5a4b" stroke-width=".3"/><path d="M1240.0 447.0 L1233.9 435.5" stroke="#4b5a4b" stroke-width=".3"/><path d="M1240.0 447.0 L1243.8 434.6" stroke="#4b5a4b" stroke-width=".3"/><path d="M1240.0 447.0 L1251.5 440.9" stroke="#4b5a4b" stroke-width=".3"/><circle cx="1246.0" cy="455.0" r="5.0" fill="none" stroke="#4b5a4b" stroke-width=".45"/><path d="M1246.0 455.0 L1250.8 456.5" stroke="#4b5a4b" stroke-width=".3"/><path d="M1246.0 455.0 L1248.3 459.4" stroke="#4b5a4b" stroke-width=".3"/><path d="M1246.0 455.0 L1244.5 459.8" stroke="#4b5a4b" stroke-width=".3"/><path d="M1246.0 455.0 L1241.6 457.3" stroke="#4b5a4b" stroke-width=".3"/><path d="M1246.0 455.0 L1241.2 453.5" stroke="#4b5a4b" stroke-width=".3"/><path d="M1246.0 455.0 L1243.7 450.6" stroke="#4b5a4b" stroke-width=".3"/><path d="M1246.0 455.0 L1247.5 450.2" stroke="#4b5a4b" stroke-width=".3"/><path d="M1246.0 455.0 L1250.4 452.7" stroke="#4b5a4b" stroke-width=".3"/><circle cx="1337.0" cy="467.0" r="5.0" fill="none" stroke="#4b5a4b" stroke-width=".45"/><path d="M1337.0 467.0 L1341.8 468.5" stroke="#4b5a4b" stroke-width=".3"/><path d="M1337.0 467.0 L1339.3 471.4" stroke="#4b5a4b" stroke-width=".3"/><path d="M1337.0 467.0 L1335.5 471.8" stroke="#4b5a4b" stroke-width=".3"/><path d="M1337.0 467.0 L1332.6 469.3" stroke="#4b5a4b" stroke-width=".3"/><path d="M1337.0 467.0 L1332.2 465.5" stroke="#4b5a4b" stroke-width=".3"/><path d="M1337.0 467.0 L1334.7 462.6" stroke="#4b5a4b" stroke-width=".3"/><path d="M1337.0 467.0 L1338.5 462.2" stroke="#4b5a4b" stroke-width=".3"/><path d="M1337.0 467.0 L1341.4 464.7" stroke="#4b5a4b" stroke-width=".3"/><circle cx="1203.0" cy="424.0" r="6.0" fill="none" stroke="#4b5a4b" stroke-width=".45"/><path d="M1203.0 424.0 L1208.7 425.8" stroke="#4b5a4b" stroke-width=".3"/><path d="M1203.0 424.0 L1205.8 429.3" stroke="#4b5a4b" stroke-width=".3"/><path d="M1203.0 424.0 L1201.2 429.7" stroke="#4b5a4b" stroke-width=".3"/><path d="M1203.0 424.0 L1197.7 426.8" stroke="#4b5a4b" stroke-width=".3"/><path d="M1203.0 424.0 L1197.3 422.2" stroke="#4b5a4b" stroke-width=".3"/><path d="M1203.0 424.0 L1200.2 418.7" stroke="#4b5a4b" stroke-width=".3"/><path d="M1203.0 424.0 L1204.8 418.3" stroke="#4b5a4b" stroke-width=".3"/><path d="M1203.0 424.0 L1208.3 421.2" stroke="#4b5a4b" stroke-width=".3"/><circle cx="1022.0" cy="318.5" r="4.6" fill="none" stroke="#4b5a4b" stroke-width=".45"/><path d="M1022.0 318.5 L1026.4 319.9" stroke="#4b5a4b" stroke-width=".3"/><path d="M1022.0 318.5 L1024.1 322.6" stroke="#4b5a4b" stroke-width=".3"/><path d="M1022.0 318.5 L1020.6 322.9" stroke="#4b5a4b" stroke-width=".3"/><path d="M1022.0 318.5 L1017.9 320.6" stroke="#4b5a4b" stroke-width=".3"/><path d="M1022.0 318.5 L1017.6 317.1" stroke="#4b5a4b" stroke-width=".3"/><path d="M1022.0 318.5 L1019.9 314.4" stroke="#4b5a4b" stroke-width=".3"/><path d="M1022.0 318.5 L1023.4 314.1" stroke="#4b5a4b" stroke-width=".3"/><path d="M1022.0 318.5 L1026.1 316.4" stroke="#4b5a4b" stroke-width=".3"/><circle cx="1022.0" cy="341.0" r="4.6" fill="none" stroke="#4b5a4b" stroke-width=".45"/><path d="M1022.0 341.0 L1026.4 342.4" stroke="#4b5a4b" stroke-width=".3"/><path d="M1022.0 341.0 L1024.1 345.1" stroke="#4b5a4b" stroke-width=".3"/><path d="M1022.0 341.0 L1020.6 345.4" stroke="#4b5a4b" stroke-width=".3"/><path d="M1022.0 341.0 L1017.9 343.1" stroke="#4b5a4b" stroke-width=".3"/><path d="M1022.0 341.0 L1017.6 339.6" stroke="#4b5a4b" stroke-width=".3"/><path d="M1022.0 341.0 L1019.9 336.9" stroke="#4b5a4b" stroke-width=".3"/><path d="M1022.0 341.0 L1023.4 336.6" stroke="#4b5a4b" stroke-width=".3"/><path d="M1022.0 341.0 L1026.1 338.9" stroke="#4b5a4b" stroke-width=".3"/><circle cx="1039.6" cy="318.5" r="4.6" fill="none" stroke="#4b5a4b" stroke-width=".45"/><path d="M1039.6 318.5 L1044.0 319.9" stroke="#4b5a4b" stroke-width=".3"/><path d="M1039.6 318.5 L1041.7 322.6" stroke="#4b5a4b" stroke-width=".3"/><path d="M1039.6 318.5 L1038.2 322.9" stroke="#4b5a4b" stroke-width=".3"/><path d="M1039.6 318.5 L1035.5 320.6" stroke="#4b5a4b" stroke-width=".3"/><path d="M1039.6 318.5 L1035.2 317.1" stroke="#4b5a4b" stroke-width=".3"/><path d="M1039.6 318.5 L1037.5 314.4" stroke="#4b5a4b" stroke-width=".3"/><path d="M1039.6 318.5 L1041.0 314.1" stroke="#4b5a4b" stroke-width=".3"/><path d="M1039.6 318.5 L1043.7 316.4" stroke="#4b5a4b" stroke-width=".3"/><circle cx="1039.6" cy="341.0" r="4.6" fill="none" stroke="#4b5a4b" stroke-width=".45"/><path d="M1039.6 341.0 L1044.0 342.4" stroke="#4b5a4b" stroke-width=".3"/><path d="M1039.6 341.0 L1041.7 345.1" stroke="#4b5a4b" stroke-width=".3"/><path d="M1039.6 341.0 L1038.2 345.4" stroke="#4b5a4b" stroke-width=".3"/><path d="M1039.6 341.0 L1035.5 343.1" stroke="#4b5a4b" stroke-width=".3"/><path d="M1039.6 341.0 L1035.2 339.6" stroke="#4b5a4b" stroke-width=".3"/><path d="M1039.6 341.0 L1037.5 336.9" stroke="#4b5a4b" stroke-width=".3"/><path d="M1039.6 341.0 L1041.0 336.6" stroke="#4b5a4b" stroke-width=".3"/><path d="M1039.6 341.0 L1043.7 338.9" stroke="#4b5a4b" stroke-width=".3"/><circle cx="1057.2" cy="318.5" r="4.6" fill="none" stroke="#4b5a4b" stroke-width=".45"/><path d="M1057.2 318.5 L1061.6 319.9" stroke="#4b5a4b" stroke-width=".3"/><path d="M1057.2 318.5 L1059.3 322.6" stroke="#4b5a4b" stroke-width=".3"/><path d="M1057.2 318.5 L1055.8 322.9" stroke="#4b5a4b" stroke-width=".3"/><path d="M1057.2 318.5 L1053.1 320.6" stroke="#4b5a4b" stroke-width=".3"/><path d="M1057.2 318.5 L1052.8 317.1" stroke="#4b5a4b" stroke-width=".3"/><path d="M1057.2 318.5 L1055.1 314.4" stroke="#4b5a4b" stroke-width=".3"/><path d="M1057.2 318.5 L1058.6 314.1" stroke="#4b5a4b" stroke-width=".3"/><path d="M1057.2 318.5 L1061.3 316.4" stroke="#4b5a4b" stroke-width=".3"/><circle cx="1057.2" cy="341.0" r="4.6" fill="none" stroke="#4b5a4b" stroke-width=".45"/><path d="M1057.2 341.0 L1061.6 342.4" stroke="#4b5a4b" stroke-width=".3"/><path d="M1057.2 341.0 L1059.3 345.1" stroke="#4b5a4b" stroke-width=".3"/><path d="M1057.2 341.0 L1055.8 345.4" stroke="#4b5a4b" stroke-width=".3"/><path d="M1057.2 341.0 L1053.1 343.1" stroke="#4b5a4b" stroke-width=".3"/><path d="M1057.2 341.0 L1052.8 339.6" stroke="#4b5a4b" stroke-width=".3"/><path d="M1057.2 341.0 L1055.1 336.9" stroke="#4b5a4b" stroke-width=".3"/><path d="M1057.2 341.0 L1058.6 336.6" stroke="#4b5a4b" stroke-width=".3"/><path d="M1057.2 341.0 L1061.3 338.9" stroke="#4b5a4b" stroke-width=".3"/><circle cx="1074.8" cy="318.5" r="4.6" fill="none" stroke="#4b5a4b" stroke-width=".45"/><path d="M1074.8 318.5 L1079.2 319.9" stroke="#4b5a4b" stroke-width=".3"/><path d="M1074.8 318.5 L1076.9 322.6" stroke="#4b5a4b" stroke-width=".3"/><path d="M1074.8 318.5 L1073.4 322.9" stroke="#4b5a4b" stroke-width=".3"/><path d="M1074.8 318.5 L1070.7 320.6" stroke="#4b5a4b" stroke-width=".3"/><path d="M1074.8 318.5 L1070.4 317.1" stroke="#4b5a4b" stroke-width=".3"/><path d="M1074.8 318.5 L1072.7 314.4" stroke="#4b5a4b" stroke-width=".3"/><path d="M1074.8 318.5 L1076.2 314.1" stroke="#4b5a4b" stroke-width=".3"/><path d="M1074.8 318.5 L1078.9 316.4" stroke="#4b5a4b" stroke-width=".3"/><circle cx="1074.8" cy="341.0" r="4.6" fill="none" stroke="#4b5a4b" stroke-width=".45"/><path d="M1074.8 341.0 L1079.2 342.4" stroke="#4b5a4b" stroke-width=".3"/><path d="M1074.8 341.0 L1076.9 345.1" stroke="#4b5a4b" stroke-width=".3"/><path d="M1074.8 341.0 L1073.4 345.4" stroke="#4b5a4b" stroke-width=".3"/><path d="M1074.8 341.0 L1070.7 343.1" stroke="#4b5a4b" stroke-width=".3"/><path d="M1074.8 341.0 L1070.4 339.6" stroke="#4b5a4b" stroke-width=".3"/><path d="M1074.8 341.0 L1072.7 336.9" stroke="#4b5a4b" stroke-width=".3"/><path d="M1074.8 341.0 L1076.2 336.6" stroke="#4b5a4b" stroke-width=".3"/><path d="M1074.8 341.0 L1078.9 338.9" stroke="#4b5a4b" stroke-width=".3"/><circle cx="1092.4" cy="318.5" r="4.6" fill="none" stroke="#4b5a4b" stroke-width=".45"/><path d="M1092.4 318.5 L1096.8 319.9" stroke="#4b5a4b" stroke-width=".3"/><path d="M1092.4 318.5 L1094.5 322.6" stroke="#4b5a4b" stroke-width=".3"/><path d="M1092.4 318.5 L1091.0 322.9" stroke="#4b5a4b" stroke-width=".3"/><path d="M1092.4 318.5 L1088.3 320.6" stroke="#4b5a4b" stroke-width=".3"/><path d="M1092.4 318.5 L1088.0 317.1" stroke="#4b5a4b" stroke-width=".3"/><path d="M1092.4 318.5 L1090.3 314.4" stroke="#4b5a4b" stroke-width=".3"/><path d="M1092.4 318.5 L1093.8 314.1" stroke="#4b5a4b" stroke-width=".3"/><path d="M1092.4 318.5 L1096.5 316.4" stroke="#4b5a4b" stroke-width=".3"/><circle cx="1092.4" cy="341.0" r="4.6" fill="none" stroke="#4b5a4b" stroke-width=".45"/><path d="M1092.4 341.0 L1096.8 342.4" stroke="#4b5a4b" stroke-width=".3"/><path d="M1092.4 341.0 L1094.5 345.1" stroke="#4b5a4b" stroke-width=".3"/><path d="M1092.4 341.0 L1091.0 345.4" stroke="#4b5a4b" stroke-width=".3"/><path d="M1092.4 341.0 L1088.3 343.1" stroke="#4b5a4b" stroke-width=".3"/><path d="M1092.4 341.0 L1088.0 339.6" stroke="#4b5a4b" stroke-width=".3"/><path d="M1092.4 341.0 L1090.3 336.9" stroke="#4b5a4b" stroke-width=".3"/><path d="M1092.4 341.0 L1093.8 336.6" stroke="#4b5a4b" stroke-width=".3"/><path d="M1092.4 341.0 L1096.5 338.9" stroke="#4b5a4b" stroke-width=".3"/><path d="M1019 318.5H1103 M1019 341H1103" stroke="#555" stroke-width=".4"/><circle cx="1066.0" cy="274.0" r="5.0" fill="none" stroke="#4b5a4b" stroke-width=".45"/><path d="M1066.0 274.0 L1070.8 275.5" stroke="#4b5a4b" stroke-width=".3"/><path d="M1066.0 274.0 L1068.3 278.4" stroke="#4b5a4b" stroke-width=".3"/><path d="M1066.0 274.0 L1064.5 278.8" stroke="#4b5a4b" stroke-width=".3"/><path d="M1066.0 274.0 L1061.6 276.3" stroke="#4b5a4b" stroke-width=".3"/><path d="M1066.0 274.0 L1061.2 272.5" stroke="#4b5a4b" stroke-width=".3"/><path d="M1066.0 274.0 L1063.7 269.6" stroke="#4b5a4b" stroke-width=".3"/><path d="M1066.0 274.0 L1067.5 269.2" stroke="#4b5a4b" stroke-width=".3"/><path d="M1066.0 274.0 L1070.4 271.7" stroke="#4b5a4b" stroke-width=".3"/><circle cx="1077.0" cy="280.0" r="5.0" fill="none" stroke="#4b5a4b" stroke-width=".45"/><path d="M1077.0 280.0 L1081.8 281.5" stroke="#4b5a4b" stroke-width=".3"/><path d="M1077.0 280.0 L1079.3 284.4" stroke="#4b5a4b" stroke-width=".3"/><path d="M1077.0 280.0 L1075.5 284.8" stroke="#4b5a4b" stroke-width=".3"/><path d="M1077.0 280.0 L1072.6 282.3" stroke="#4b5a4b" stroke-width=".3"/><path d="M1077.0 280.0 L1072.2 278.5" stroke="#4b5a4b" stroke-width=".3"/><path d="M1077.0 280.0 L1074.7 275.6" stroke="#4b5a4b" stroke-width=".3"/><path d="M1077.0 280.0 L1078.5 275.2" stroke="#4b5a4b" stroke-width=".3"/><path d="M1077.0 280.0 L1081.4 277.7" stroke="#4b5a4b" stroke-width=".3"/><circle cx="895.0" cy="444.0" r="6.0" fill="none" stroke="#4b5a4b" stroke-width=".45"/><path d="M895.0 444.0 L900.7 445.8" stroke="#4b5a4b" stroke-width=".3"/><path d="M895.0 444.0 L897.8 449.3" stroke="#4b5a4b" stroke-width=".3"/><path d="M895.0 444.0 L893.2 449.7" stroke="#4b5a4b" stroke-width=".3"/><path d="M895.0 444.0 L889.7 446.8" stroke="#4b5a4b" stroke-width=".3"/><path d="M895.0 444.0 L889.3 442.2" stroke="#4b5a4b" stroke-width=".3"/><path d="M895.0 444.0 L892.2 438.7" stroke="#4b5a4b" stroke-width=".3"/><path d="M895.0 444.0 L896.8 438.3" stroke="#4b5a4b" stroke-width=".3"/><path d="M895.0 444.0 L900.3 441.2" stroke="#4b5a4b" stroke-width=".3"/><circle cx="887.0" cy="466.0" r="9.0" fill="none" stroke="#4b5a4b" stroke-width=".45"/><path d="M887.0 466.0 L895.6 468.7" stroke="#4b5a4b" stroke-width=".3"/><path d="M887.0 466.0 L891.2 474.0" stroke="#4b5a4b" stroke-width=".3"/><path d="M887.0 466.0 L884.3 474.6" stroke="#4b5a4b" stroke-width=".3"/><path d="M887.0 466.0 L879.0 470.2" stroke="#4b5a4b" stroke-width=".3"/><path d="M887.0 466.0 L878.4 463.3" stroke="#4b5a4b" stroke-width=".3"/><path d="M887.0 466.0 L882.8 458.0" stroke="#4b5a4b" stroke-width=".3"/><path d="M887.0 466.0 L889.7 457.4" stroke="#4b5a4b" stroke-width=".3"/><path d="M887.0 466.0 L895.0 461.8" stroke="#4b5a4b" stroke-width=".3"/><circle cx="909.0" cy="466.0" r="6.5" fill="none" stroke="#4b5a4b" stroke-width=".45"/><path d="M909.0 466.0 L915.2 467.9" stroke="#4b5a4b" stroke-width=".3"/><path d="M909.0 466.0 L912.0 471.7" stroke="#4b5a4b" stroke-width=".3"/><path d="M909.0 466.0 L907.1 472.2" stroke="#4b5a4b" stroke-width=".3"/><path d="M909.0 466.0 L903.3 469.0" stroke="#4b5a4b" stroke-width=".3"/><path d="M909.0 466.0 L902.8 464.1" stroke="#4b5a4b" stroke-width=".3"/><path d="M909.0 466.0 L906.0 460.3" stroke="#4b5a4b" stroke-width=".3"/><path d="M909.0 466.0 L910.9 459.8" stroke="#4b5a4b" stroke-width=".3"/><path d="M909.0 466.0 L914.7 463.0" stroke="#4b5a4b" stroke-width=".3"/><circle cx="933.0" cy="464.0" r="7.0" fill="none" stroke="#4b5a4b" stroke-width=".45"/><path d="M933.0 464.0 L939.7 466.1" stroke="#4b5a4b" stroke-width=".3"/><path d="M933.0 464.0 L936.3 470.2" stroke="#4b5a4b" stroke-width=".3"/><path d="M933.0 464.0 L930.9 470.7" stroke="#4b5a4b" stroke-width=".3"/><path d="M933.0 464.0 L926.8 467.3" stroke="#4b5a4b" stroke-width=".3"/><path d="M933.0 464.0 L926.3 461.9" stroke="#4b5a4b" stroke-width=".3"/><path d="M933.0 464.0 L929.7 457.8" stroke="#4b5a4b" stroke-width=".3"/><path d="M933.0 464.0 L935.1 457.3" stroke="#4b5a4b" stroke-width=".3"/><path d="M933.0 464.0 L939.2 460.7" stroke="#4b5a4b" stroke-width=".3"/><circle cx="957.0" cy="464.0" r="7.0" fill="none" stroke="#4b5a4b" stroke-width=".45"/><path d="M957.0 464.0 L963.7 466.1" stroke="#4b5a4b" stroke-width=".3"/><path d="M957.0 464.0 L960.3 470.2" stroke="#4b5a4b" stroke-width=".3"/><path d="M957.0 464.0 L954.9 470.7" stroke="#4b5a4b" stroke-width=".3"/><path d="M957.0 464.0 L950.8 467.3" stroke="#4b5a4b" stroke-width=".3"/><path d="M957.0 464.0 L950.3 461.9" stroke="#4b5a4b" stroke-width=".3"/><path d="M957.0 464.0 L953.7 457.8" stroke="#4b5a4b" stroke-width=".3"/><path d="M957.0 464.0 L959.1 457.3" stroke="#4b5a4b" stroke-width=".3"/><path d="M957.0 464.0 L963.2 460.7" stroke="#4b5a4b" stroke-width=".3"/><circle cx="981.0" cy="465.0" r="10.0" fill="none" stroke="#4b5a4b" stroke-width=".45"/><path d="M981.0 465.0 L990.6 468.0" stroke="#4b5a4b" stroke-width=".3"/><path d="M981.0 465.0 L985.7 473.8" stroke="#4b5a4b" stroke-width=".3"/><path d="M981.0 465.0 L978.0 474.6" stroke="#4b5a4b" stroke-width=".3"/><path d="M981.0 465.0 L972.2 469.7" stroke="#4b5a4b" stroke-width=".3"/><path d="M981.0 465.0 L971.4 462.0" stroke="#4b5a4b" stroke-width=".3"/><path d="M981.0 465.0 L976.3 456.2" stroke="#4b5a4b" stroke-width=".3"/><path d="M981.0 465.0 L984.0 455.4" stroke="#4b5a4b" stroke-width=".3"/><path d="M981.0 465.0 L989.8 460.3" stroke="#4b5a4b" stroke-width=".3"/><circle cx="1009.0" cy="464.0" r="6.5" fill="none" stroke="#4b5a4b" stroke-width=".45"/><path d="M1009.0 464.0 L1015.2 465.9" stroke="#4b5a4b" stroke-width=".3"/><path d="M1009.0 464.0 L1012.0 469.7" stroke="#4b5a4b" stroke-width=".3"/><path d="M1009.0 464.0 L1007.1 470.2" stroke="#4b5a4b" stroke-width=".3"/><path d="M1009.0 464.0 L1003.3 467.0" stroke="#4b5a4b" stroke-width=".3"/><path d="M1009.0 464.0 L1002.8 462.1" stroke="#4b5a4b" stroke-width=".3"/><path d="M1009.0 464.0 L1006.0 458.3" stroke="#4b5a4b" stroke-width=".3"/><path d="M1009.0 464.0 L1010.9 457.8" stroke="#4b5a4b" stroke-width=".3"/><path d="M1009.0 464.0 L1014.7 461.0" stroke="#4b5a4b" stroke-width=".3"/><circle cx="1034.0" cy="464.0" r="7.0" fill="none" stroke="#4b5a4b" stroke-width=".45"/><path d="M1034.0 464.0 L1040.7 466.1" stroke="#4b5a4b" stroke-width=".3"/><path d="M1034.0 464.0 L1037.3 470.2" stroke="#4b5a4b" stroke-width=".3"/><path d="M1034.0 464.0 L1031.9 470.7" stroke="#4b5a4b" stroke-width=".3"/><path d="M1034.0 464.0 L1027.8 467.3" stroke="#4b5a4b" stroke-width=".3"/><path d="M1034.0 464.0 L1027.3 461.9" stroke="#4b5a4b" stroke-width=".3"/><path d="M1034.0 464.0 L1030.7 457.8" stroke="#4b5a4b" stroke-width=".3"/><path d="M1034.0 464.0 L1036.1 457.3" stroke="#4b5a4b" stroke-width=".3"/><path d="M1034.0 464.0 L1040.2 460.7" stroke="#4b5a4b" stroke-width=".3"/><circle cx="1062.0" cy="466.0" r="10.0" fill="none" stroke="#4b5a4b" stroke-width=".45"/><path d="M1062.0 466.0 L1071.6 469.0" stroke="#4b5a4b" stroke-width=".3"/><path d="M1062.0 466.0 L1066.7 474.8" stroke="#4b5a4b" stroke-width=".3"/><path d="M1062.0 466.0 L1059.0 475.6" stroke="#4b5a4b" stroke-width=".3"/><path d="M1062.0 466.0 L1053.2 470.7" stroke="#4b5a4b" stroke-width=".3"/><path d="M1062.0 466.0 L1052.4 463.0" stroke="#4b5a4b" stroke-width=".3"/><path d="M1062.0 466.0 L1057.3 457.2" stroke="#4b5a4b" stroke-width=".3"/><path d="M1062.0 466.0 L1065.0 456.4" stroke="#4b5a4b" stroke-width=".3"/><path d="M1062.0 466.0 L1070.8 461.3" stroke="#4b5a4b" stroke-width=".3"/><circle cx="1086.0" cy="470.0" r="7.0" fill="none" stroke="#4b5a4b" stroke-width=".45"/><path d="M1086.0 470.0 L1092.7 472.1" stroke="#4b5a4b" stroke-width=".3"/><path d="M1086.0 470.0 L1089.3 476.2" stroke="#4b5a4b" stroke-width=".3"/><path d="M1086.0 470.0 L1083.9 476.7" stroke="#4b5a4b" stroke-width=".3"/><path d="M1086.0 470.0 L1079.8 473.3" stroke="#4b5a4b" stroke-width=".3"/><path d="M1086.0 470.0 L1079.3 467.9" stroke="#4b5a4b" stroke-width=".3"/><path d="M1086.0 470.0 L1082.7 463.8" stroke="#4b5a4b" stroke-width=".3"/><path d="M1086.0 470.0 L1088.1 463.3" stroke="#4b5a4b" stroke-width=".3"/><path d="M1086.0 470.0 L1092.2 466.7" stroke="#4b5a4b" stroke-width=".3"/><circle cx="1016.0" cy="449.0" r="7.0" fill="none" stroke="#4b5a4b" stroke-width=".45"/><path d="M1016.0 449.0 L1022.7 451.1" stroke="#4b5a4b" stroke-width=".3"/><path d="M1016.0 449.0 L1019.3 455.2" stroke="#4b5a4b" stroke-width=".3"/><path d="M1016.0 449.0 L1013.9 455.7" stroke="#4b5a4b" stroke-width=".3"/><path d="M1016.0 449.0 L1009.8 452.3" stroke="#4b5a4b" stroke-width=".3"/><path d="M1016.0 449.0 L1009.3 446.9" stroke="#4b5a4b" stroke-width=".3"/><path d="M1016.0 449.0 L1012.7 442.8" stroke="#4b5a4b" stroke-width=".3"/><path d="M1016.0 449.0 L1018.1 442.3" stroke="#4b5a4b" stroke-width=".3"/><path d="M1016.0 449.0 L1022.2 445.7" stroke="#4b5a4b" stroke-width=".3"/><circle cx="1039.0" cy="448.0" r="4.0" fill="none" stroke="#4b5a4b" stroke-width=".45"/><path d="M1039.0 448.0 L1042.8 449.2" stroke="#4b5a4b" stroke-width=".3"/><path d="M1039.0 448.0 L1040.9 451.5" stroke="#4b5a4b" stroke-width=".3"/><path d="M1039.0 448.0 L1037.8 451.8" stroke="#4b5a4b" stroke-width=".3"/><path d="M1039.0 448.0 L1035.5 449.9" stroke="#4b5a4b" stroke-width=".3"/><path d="M1039.0 448.0 L1035.2 446.8" stroke="#4b5a4b" stroke-width=".3"/><path d="M1039.0 448.0 L1037.1 444.5" stroke="#4b5a4b" stroke-width=".3"/><path d="M1039.0 448.0 L1040.2 444.2" stroke="#4b5a4b" stroke-width=".3"/><path d="M1039.0 448.0 L1042.5 446.1" stroke="#4b5a4b" stroke-width=".3"/><path d="M677 454.5H1345" stroke="#8aa085" stroke-width=".3" stroke-dasharray="4 3" opacity=".7"/><rect x="972.0" y="437.0" width="4.0" height="38.5" fill="#d8cdbd" /><rect x="945.0" y="438.0" width="30.0" height="14.0" fill="#6b7a66" /><rect x="944.0" y="441.0" width="16.0" height="10.0" fill="#c6dfb9" stroke="#444" stroke-width=".5"/><circle cx="750.0" cy="231.0" r="7.0" fill="none" stroke="#4b5a4b" stroke-width=".45"/><path d="M750.0 231.0 L756.7 233.1" stroke="#4b5a4b" stroke-width=".3"/><path d="M750.0 231.0 L753.3 237.2" stroke="#4b5a4b" stroke-width=".3"/><path d="M750.0 231.0 L747.9 237.7" stroke="#4b5a4b" stroke-width=".3"/><path d="M750.0 231.0 L743.8 234.3" stroke="#4b5a4b" stroke-width=".3"/><path d="M750.0 231.0 L743.3 228.9" stroke="#4b5a4b" stroke-width=".3"/><path d="M750.0 231.0 L746.7 224.8" stroke="#4b5a4b" stroke-width=".3"/><path d="M750.0 231.0 L752.1 224.3" stroke="#4b5a4b" stroke-width=".3"/><path d="M750.0 231.0 L756.2 227.7" stroke="#4b5a4b" stroke-width=".3"/><circle cx="748.0" cy="259.0" r="7.5" fill="none" stroke="#4b5a4b" stroke-width=".45"/><path d="M748.0 259.0 L755.2 261.2" stroke="#4b5a4b" stroke-width=".3"/><path d="M748.0 259.0 L751.5 265.6" stroke="#4b5a4b" stroke-width=".3"/><path d="M748.0 259.0 L745.8 266.2" stroke="#4b5a4b" stroke-width=".3"/><path d="M748.0 259.0 L741.4 262.5" stroke="#4b5a4b" stroke-width=".3"/><path d="M748.0 259.0 L740.8 256.8" stroke="#4b5a4b" stroke-width=".3"/><path d="M748.0 259.0 L744.5 252.4" stroke="#4b5a4b" stroke-width=".3"/><path d="M748.0 259.0 L750.2 251.8" stroke="#4b5a4b" stroke-width=".3"/><path d="M748.0 259.0 L754.6 255.5" stroke="#4b5a4b" stroke-width=".3"/><circle cx="745.0" cy="279.0" r="7.5" fill="none" stroke="#4b5a4b" stroke-width=".45"/><path d="M745.0 279.0 L752.2 281.2" stroke="#4b5a4b" stroke-width=".3"/><path d="M745.0 279.0 L748.5 285.6" stroke="#4b5a4b" stroke-width=".3"/><path d="M745.0 279.0 L742.8 286.2" stroke="#4b5a4b" stroke-width=".3"/><path d="M745.0 279.0 L738.4 282.5" stroke="#4b5a4b" stroke-width=".3"/><path d="M745.0 279.0 L737.8 276.8" stroke="#4b5a4b" stroke-width=".3"/><path d="M745.0 279.0 L741.5 272.4" stroke="#4b5a4b" stroke-width=".3"/><path d="M745.0 279.0 L747.2 271.8" stroke="#4b5a4b" stroke-width=".3"/><path d="M745.0 279.0 L751.6 275.5" stroke="#4b5a4b" stroke-width=".3"/><circle cx="742.0" cy="296.0" r="9.0" fill="none" stroke="#4b5a4b" stroke-width=".45"/><path d="M742.0 296.0 L750.6 298.7" stroke="#4b5a4b" stroke-width=".3"/><path d="M742.0 296.0 L746.2 304.0" stroke="#4b5a4b" stroke-width=".3"/><path d="M742.0 296.0 L739.3 304.6" stroke="#4b5a4b" stroke-width=".3"/><path d="M742.0 296.0 L734.0 300.2" stroke="#4b5a4b" stroke-width=".3"/><path d="M742.0 296.0 L733.4 293.3" stroke="#4b5a4b" stroke-width=".3"/><path d="M742.0 296.0 L737.8 288.0" stroke="#4b5a4b" stroke-width=".3"/><path d="M742.0 296.0 L744.7 287.4" stroke="#4b5a4b" stroke-width=".3"/><path d="M742.0 296.0 L750.0 291.8" stroke="#4b5a4b" stroke-width=".3"/><circle cx="749.0" cy="328.0" r="7.5" fill="none" stroke="#4b5a4b" stroke-width=".45"/><path d="M749.0 328.0 L756.2 330.2" stroke="#4b5a4b" stroke-width=".3"/><path d="M749.0 328.0 L752.5 334.6" stroke="#4b5a4b" stroke-width=".3"/><path d="M749.0 328.0 L746.8 335.2" stroke="#4b5a4b" stroke-width=".3"/><path d="M749.0 328.0 L742.4 331.5" stroke="#4b5a4b" stroke-width=".3"/><path d="M749.0 328.0 L741.8 325.8" stroke="#4b5a4b" stroke-width=".3"/><path d="M749.0 328.0 L745.5 321.4" stroke="#4b5a4b" stroke-width=".3"/><path d="M749.0 328.0 L751.2 320.8" stroke="#4b5a4b" stroke-width=".3"/><path d="M749.0 328.0 L755.6 324.5" stroke="#4b5a4b" stroke-width=".3"/><circle cx="749.0" cy="351.0" r="7.0" fill="none" stroke="#4b5a4b" stroke-width=".45"/><path d="M749.0 351.0 L755.7 353.1" stroke="#4b5a4b" stroke-width=".3"/><path d="M749.0 351.0 L752.3 357.2" stroke="#4b5a4b" stroke-width=".3"/><path d="M749.0 351.0 L746.9 357.7" stroke="#4b5a4b" stroke-width=".3"/><path d="M749.0 351.0 L742.8 354.3" stroke="#4b5a4b" stroke-width=".3"/><path d="M749.0 351.0 L742.3 348.9" stroke="#4b5a4b" stroke-width=".3"/><path d="M749.0 351.0 L745.7 344.8" stroke="#4b5a4b" stroke-width=".3"/><path d="M749.0 351.0 L751.1 344.3" stroke="#4b5a4b" stroke-width=".3"/><path d="M749.0 351.0 L755.2 347.7" stroke="#4b5a4b" stroke-width=".3"/><circle cx="766.0" cy="398.0" r="7.5" fill="none" stroke="#4b5a4b" stroke-width=".45"/><path d="M766.0 398.0 L773.2 400.2" stroke="#4b5a4b" stroke-width=".3"/><path d="M766.0 398.0 L769.5 404.6" stroke="#4b5a4b" stroke-width=".3"/><path d="M766.0 398.0 L763.8 405.2" stroke="#4b5a4b" stroke-width=".3"/><path d="M766.0 398.0 L759.4 401.5" stroke="#4b5a4b" stroke-width=".3"/><path d="M766.0 398.0 L758.8 395.8" stroke="#4b5a4b" stroke-width=".3"/><path d="M766.0 398.0 L762.5 391.4" stroke="#4b5a4b" stroke-width=".3"/><path d="M766.0 398.0 L768.2 390.8" stroke="#4b5a4b" stroke-width=".3"/><path d="M766.0 398.0 L772.6 394.5" stroke="#4b5a4b" stroke-width=".3"/><circle cx="770.0" cy="420.0" r="9.0" fill="none" stroke="#4b5a4b" stroke-width=".45"/><path d="M770.0 420.0 L778.6 422.7" stroke="#4b5a4b" stroke-width=".3"/><path d="M770.0 420.0 L774.2 428.0" stroke="#4b5a4b" stroke-width=".3"/><path d="M770.0 420.0 L767.3 428.6" stroke="#4b5a4b" stroke-width=".3"/><path d="M770.0 420.0 L762.0 424.2" stroke="#4b5a4b" stroke-width=".3"/><path d="M770.0 420.0 L761.4 417.3" stroke="#4b5a4b" stroke-width=".3"/><path d="M770.0 420.0 L765.8 412.0" stroke="#4b5a4b" stroke-width=".3"/><path d="M770.0 420.0 L772.7 411.4" stroke="#4b5a4b" stroke-width=".3"/><path d="M770.0 420.0 L778.0 415.8" stroke="#4b5a4b" stroke-width=".3"/><circle cx="766.0" cy="455.0" r="8.0" fill="none" stroke="#4b5a4b" stroke-width=".45"/><path d="M766.0 455.0 L773.6 457.4" stroke="#4b5a4b" stroke-width=".3"/><path d="M766.0 455.0 L769.7 462.1" stroke="#4b5a4b" stroke-width=".3"/><path d="M766.0 455.0 L763.6 462.6" stroke="#4b5a4b" stroke-width=".3"/><path d="M766.0 455.0 L758.9 458.7" stroke="#4b5a4b" stroke-width=".3"/><path d="M766.0 455.0 L758.4 452.6" stroke="#4b5a4b" stroke-width=".3"/><path d="M766.0 455.0 L762.3 447.9" stroke="#4b5a4b" stroke-width=".3"/><path d="M766.0 455.0 L768.4 447.4" stroke="#4b5a4b" stroke-width=".3"/><path d="M766.0 455.0 L773.1 451.3" stroke="#4b5a4b" stroke-width=".3"/><circle cx="771.0" cy="437.0" r="7.0" fill="none" stroke="#4b5a4b" stroke-width=".45"/><path d="M771.0 437.0 L777.7 439.1" stroke="#4b5a4b" stroke-width=".3"/><path d="M771.0 437.0 L774.3 443.2" stroke="#4b5a4b" stroke-width=".3"/><path d="M771.0 437.0 L768.9 443.7" stroke="#4b5a4b" stroke-width=".3"/><path d="M771.0 437.0 L764.8 440.3" stroke="#4b5a4b" stroke-width=".3"/><path d="M771.0 437.0 L764.3 434.9" stroke="#4b5a4b" stroke-width=".3"/><path d="M771.0 437.0 L767.7 430.8" stroke="#4b5a4b" stroke-width=".3"/><path d="M771.0 437.0 L773.1 430.3" stroke="#4b5a4b" stroke-width=".3"/><path d="M771.0 437.0 L777.2 433.7" stroke="#4b5a4b" stroke-width=".3"/><circle cx="826.0" cy="388.0" r="10.0" fill="none" stroke="#4b5a4b" stroke-width=".45"/><path d="M826.0 388.0 L835.6 391.0" stroke="#4b5a4b" stroke-width=".3"/><path d="M826.0 388.0 L830.7 396.8" stroke="#4b5a4b" stroke-width=".3"/><path d="M826.0 388.0 L823.0 397.6" stroke="#4b5a4b" stroke-width=".3"/><path d="M826.0 388.0 L817.2 392.7" stroke="#4b5a4b" stroke-width=".3"/><path d="M826.0 388.0 L816.4 385.0" stroke="#4b5a4b" stroke-width=".3"/><path d="M826.0 388.0 L821.3 379.2" stroke="#4b5a4b" stroke-width=".3"/><path d="M826.0 388.0 L829.0 378.4" stroke="#4b5a4b" stroke-width=".3"/><path d="M826.0 388.0 L834.8 383.3" stroke="#4b5a4b" stroke-width=".3"/><circle cx="829.0" cy="410.0" r="10.0" fill="none" stroke="#4b5a4b" stroke-width=".45"/><path d="M829.0 410.0 L838.6 413.0" stroke="#4b5a4b" stroke-width=".3"/><path d="M829.0 410.0 L833.7 418.8" stroke="#4b5a4b" stroke-width=".3"/><path d="M829.0 410.0 L826.0 419.6" stroke="#4b5a4b" stroke-width=".3"/><path d="M829.0 410.0 L820.2 414.7" stroke="#4b5a4b" stroke-width=".3"/><path d="M829.0 410.0 L819.4 407.0" stroke="#4b5a4b" stroke-width=".3"/><path d="M829.0 410.0 L824.3 401.2" stroke="#4b5a4b" stroke-width=".3"/><path d="M829.0 410.0 L832.0 400.4" stroke="#4b5a4b" stroke-width=".3"/><path d="M829.0 410.0 L837.8 405.3" stroke="#4b5a4b" stroke-width=".3"/><circle cx="826.0" cy="437.0" r="10.0" fill="none" stroke="#4b5a4b" stroke-width=".45"/><path d="M826.0 437.0 L835.6 440.0" stroke="#4b5a4b" stroke-width=".3"/><path d="M826.0 437.0 L830.7 445.8" stroke="#4b5a4b" stroke-width=".3"/><path d="M826.0 437.0 L823.0 446.6" stroke="#4b5a4b" stroke-width=".3"/><path d="M826.0 437.0 L817.2 441.7" stroke="#4b5a4b" stroke-width=".3"/><path d="M826.0 437.0 L816.4 434.0" stroke="#4b5a4b" stroke-width=".3"/><path d="M826.0 437.0 L821.3 428.2" stroke="#4b5a4b" stroke-width=".3"/><path d="M826.0 437.0 L829.0 427.4" stroke="#4b5a4b" stroke-width=".3"/><path d="M826.0 437.0 L834.8 432.3" stroke="#4b5a4b" stroke-width=".3"/><circle cx="770.0" cy="382.0" r="8.0" fill="none" stroke="#4b5a4b" stroke-width=".45"/><path d="M770.0 382.0 L777.6 384.4" stroke="#4b5a4b" stroke-width=".3"/><path d="M770.0 382.0 L773.7 389.1" stroke="#4b5a4b" stroke-width=".3"/><path d="M770.0 382.0 L767.6 389.6" stroke="#4b5a4b" stroke-width=".3"/><path d="M770.0 382.0 L762.9 385.7" stroke="#4b5a4b" stroke-width=".3"/><path d="M770.0 382.0 L762.4 379.6" stroke="#4b5a4b" stroke-width=".3"/><path d="M770.0 382.0 L766.3 374.9" stroke="#4b5a4b" stroke-width=".3"/><path d="M770.0 382.0 L772.4 374.4" stroke="#4b5a4b" stroke-width=".3"/><path d="M770.0 382.0 L777.1 378.3" stroke="#4b5a4b" stroke-width=".3"/><circle cx="870.0" cy="228.0" r="4.0" fill="none" stroke="#4b5a4b" stroke-width=".45"/><path d="M870.0 228.0 L873.8 229.2" stroke="#4b5a4b" stroke-width=".3"/><path d="M870.0 228.0 L871.9 231.5" stroke="#4b5a4b" stroke-width=".3"/><path d="M870.0 228.0 L868.8 231.8" stroke="#4b5a4b" stroke-width=".3"/><path d="M870.0 228.0 L866.5 229.9" stroke="#4b5a4b" stroke-width=".3"/><path d="M870.0 228.0 L866.2 226.8" stroke="#4b5a4b" stroke-width=".3"/><path d="M870.0 228.0 L868.1 224.5" stroke="#4b5a4b" stroke-width=".3"/><path d="M870.0 228.0 L871.2 224.2" stroke="#4b5a4b" stroke-width=".3"/><path d="M870.0 228.0 L873.5 226.1" stroke="#4b5a4b" stroke-width=".3"/><circle cx="887.0" cy="236.0" r="5.0" fill="none" stroke="#4b5a4b" stroke-width=".45"/><path d="M887.0 236.0 L891.8 237.5" stroke="#4b5a4b" stroke-width=".3"/><path d="M887.0 236.0 L889.3 240.4" stroke="#4b5a4b" stroke-width=".3"/><path d="M887.0 236.0 L885.5 240.8" stroke="#4b5a4b" stroke-width=".3"/><path d="M887.0 236.0 L882.6 238.3" stroke="#4b5a4b" stroke-width=".3"/><path d="M887.0 236.0 L882.2 234.5" stroke="#4b5a4b" stroke-width=".3"/><path d="M887.0 236.0 L884.7 231.6" stroke="#4b5a4b" stroke-width=".3"/><path d="M887.0 236.0 L888.5 231.2" stroke="#4b5a4b" stroke-width=".3"/><path d="M887.0 236.0 L891.4 233.7" stroke="#4b5a4b" stroke-width=".3"/><circle cx="870.0" cy="262.0" r="3.5" fill="none" stroke="#4b5a4b" stroke-width=".45"/><path d="M870.0 262.0 L873.3 263.0" stroke="#4b5a4b" stroke-width=".3"/><path d="M870.0 262.0 L871.6 265.1" stroke="#4b5a4b" stroke-width=".3"/><path d="M870.0 262.0 L869.0 265.3" stroke="#4b5a4b" stroke-width=".3"/><path d="M870.0 262.0 L866.9 263.6" stroke="#4b5a4b" stroke-width=".3"/><path d="M870.0 262.0 L866.7 261.0" stroke="#4b5a4b" stroke-width=".3"/><path d="M870.0 262.0 L868.4 258.9" stroke="#4b5a4b" stroke-width=".3"/><path d="M870.0 262.0 L871.0 258.7" stroke="#4b5a4b" stroke-width=".3"/><path d="M870.0 262.0 L873.1 260.4" stroke="#4b5a4b" stroke-width=".3"/><circle cx="887.0" cy="275.0" r="5.0" fill="none" stroke="#4b5a4b" stroke-width=".45"/><path d="M887.0 275.0 L891.8 276.5" stroke="#4b5a4b" stroke-width=".3"/><path d="M887.0 275.0 L889.3 279.4" stroke="#4b5a4b" stroke-width=".3"/><path d="M887.0 275.0 L885.5 279.8" stroke="#4b5a4b" stroke-width=".3"/><path d="M887.0 275.0 L882.6 277.3" stroke="#4b5a4b" stroke-width=".3"/><path d="M887.0 275.0 L882.2 273.5" stroke="#4b5a4b" stroke-width=".3"/><path d="M887.0 275.0 L884.7 270.6" stroke="#4b5a4b" stroke-width=".3"/><path d="M887.0 275.0 L888.5 270.2" stroke="#4b5a4b" stroke-width=".3"/><path d="M887.0 275.0 L891.4 272.7" stroke="#4b5a4b" stroke-width=".3"/><circle cx="870.0" cy="246.0" r="3.5" fill="none" stroke="#4b5a4b" stroke-width=".45"/><path d="M870.0 246.0 L873.3 247.0" stroke="#4b5a4b" stroke-width=".3"/><path d="M870.0 246.0 L871.6 249.1" stroke="#4b5a4b" stroke-width=".3"/><path d="M870.0 246.0 L869.0 249.3" stroke="#4b5a4b" stroke-width=".3"/><path d="M870.0 246.0 L866.9 247.6" stroke="#4b5a4b" stroke-width=".3"/><path d="M870.0 246.0 L866.7 245.0" stroke="#4b5a4b" stroke-width=".3"/><path d="M870.0 246.0 L868.4 242.9" stroke="#4b5a4b" stroke-width=".3"/><path d="M870.0 246.0 L871.0 242.7" stroke="#4b5a4b" stroke-width=".3"/><path d="M870.0 246.0 L873.1 244.4" stroke="#4b5a4b" stroke-width=".3"/><circle cx="887.0" cy="256.0" r="4.5" fill="none" stroke="#4b5a4b" stroke-width=".45"/><path d="M887.0 256.0 L891.3 257.3" stroke="#4b5a4b" stroke-width=".3"/><path d="M887.0 256.0 L889.1 260.0" stroke="#4b5a4b" stroke-width=".3"/><path d="M887.0 256.0 L885.7 260.3" stroke="#4b5a4b" stroke-width=".3"/><path d="M887.0 256.0 L883.0 258.1" stroke="#4b5a4b" stroke-width=".3"/><path d="M887.0 256.0 L882.7 254.7" stroke="#4b5a4b" stroke-width=".3"/><path d="M887.0 256.0 L884.9 252.0" stroke="#4b5a4b" stroke-width=".3"/><path d="M887.0 256.0 L888.3 251.7" stroke="#4b5a4b" stroke-width=".3"/><path d="M887.0 256.0 L891.0 253.9" stroke="#4b5a4b" stroke-width=".3"/><circle cx="700.5" cy="218.0" r="2.2" fill="none" stroke="#4b5a4b" stroke-width=".45"/><path d="M700.5 218.0 L702.6 218.7" stroke="#4b5a4b" stroke-width=".3"/><path d="M700.5 218.0 L701.5 219.9" stroke="#4b5a4b" stroke-width=".3"/><path d="M700.5 218.0 L699.8 220.1" stroke="#4b5a4b" stroke-width=".3"/><path d="M700.5 218.0 L698.6 219.0" stroke="#4b5a4b" stroke-width=".3"/><path d="M700.5 218.0 L698.4 217.3" stroke="#4b5a4b" stroke-width=".3"/><path d="M700.5 218.0 L699.5 216.1" stroke="#4b5a4b" stroke-width=".3"/><path d="M700.5 218.0 L701.2 215.9" stroke="#4b5a4b" stroke-width=".3"/><path d="M700.5 218.0 L702.4 217.0" stroke="#4b5a4b" stroke-width=".3"/></g>
<path d="M577.3 213V577" stroke="#333" stroke-width="1"/><path d="M565.4 213V577" stroke="#bbb" stroke-width=".8"/>
<path d="M1344.4 213V577" stroke="#6a6a6a" stroke-width=".9"/>
<path d="M956.2 441.4 L950.61 430.97 A7.1 7.1 0 1 1 961.79 430.97 Z" fill="#e3000f"/><path d="M1012.1 328.0 L1007.21 318.62 A6.2 6.2 0 1 1 1016.99 318.62 Z" fill="#f4c430" stroke="#3a76d6" stroke-width="0.9"/><circle cx="1012.1" cy="314" r="1.7" fill="#8a6a10"/><path d="M1060.2 296.0 L1055.24 286.48 A6.3 6.3 0 1 1 1065.16 286.48 Z" fill="#fff" stroke="#3a76d6" stroke-width="0.9"/><path d="M849.9 391.6 L845.09 383.06 A6.1 6.1 0 1 1 854.71 383.06 Z" fill="#fff" stroke="#3a76d6" stroke-width="0.9"/><rect x="846.2" y="375.6" width="7.4" height="7.2" fill="#d0101c"/>
<text x="1060.2" y="284.6" font-size="4.6" text-anchor="middle" font-family="Liberation Sans, sans-serif" fill="#333">M</text><text x="849.9" y="381" font-size="4.4" text-anchor="middle" font-family="Liberation Sans, sans-serif" fill="#fff">D</text>
<text x="1143" y="310" font-size="4.6" font-family="Liberation Sans, sans-serif" fill="#333">PARKING 118 CARS</text>
<text x="962.5" y="500.6" font-size="4.6" font-family="Liberation Sans, sans-serif" fill="#333">McDOWALL STREET</text>
<text x="1260.5" y="537" font-size="4.4" font-family="Liberation Sans, sans-serif" fill="#333">BICENTENARY PARK</text>
<text x="1243.6" y="250" font-size="4.4" font-family="Liberation Sans, sans-serif" fill="#333">Proposed</text><text x="1243.6" y="257.4" font-size="4.4" font-family="Liberation Sans, sans-serif" fill="#333">Uncovered</text><text x="1243.6" y="264.8" font-size="4.4" font-weight="700" font-family="Liberation Sans, sans-serif" fill="#333">Walkway</text>
<text transform="translate(1300.5 286) rotate(-90)" font-size="4.4" font-family="Liberation Sans, sans-serif" fill="#333">TRANSITION ACCOM</text>
<text transform="translate(726 368) rotate(-90)" font-size="4.6" font-family="Liberation Sans, sans-serif" fill="#333">CURREY STREET</text>
<text transform="translate(1008 343) rotate(-90)" font-size="4.4" font-family="Liberation Sans, sans-serif" fill="#333">DROP</text>
<text x="805.6" y="406" font-size="4.4" text-anchor="middle" font-family="Liberation Sans, sans-serif" fill="#333">STAFF AFTER</text><text x="805.6" y="413.2" font-size="4.4" text-anchor="middle" font-family="Liberation Sans, sans-serif" fill="#333">HOURS PARKING</text><text x="805.6" y="420.4" font-size="4.4" text-anchor="middle" font-family="Liberation Sans, sans-serif" fill="#333">8 CARS (EXISTING)</text>
<path d="M1311 408H1326 M1320.5 402.5L1326 408L1320.5 413.5" stroke="#c9d6c6" stroke-width="1.3" fill="none"/>
</svg>
<span class="t " style="left:892.6px;top:597.02px;font-size:12.85px;font-weight:400;color:#fff;text-shadow:0 0 .4px #fff">21/2/2024 @ 1:19 PM</span>
<svg class="abs" style="left:1309.5px;top:584.6px" width="23" height="23" viewBox="0 0 23 23"><path d="M1.6 12.5 V21 H21.4 V12.5 M11.5 1.4 V15 M5.8 9.6 L11.5 15.3 L17.2 9.6" fill="none" stroke="#c3cbce" stroke-width="2.2"/></svg>
<div class="abs" style="left:570px;top:642.3px;width:126px;height:125.6px;background:#000;border:1.3px solid #18b4ea"></div>
<svg class="abs" style="left:571px;top:643.3px" width="124" height="124" viewBox="0 0 124 124"><g transform="translate(0 -0.66) scale(0.15897) translate(-565 0)"><use href="#plan"/><path d="M956.5 441 L950.6 431 A7.6 7.6 0 1 1 962.4 431 Z" fill="#e3000f"/></g></svg>
<div class="abs" style="left:701px;top:643px;width:124px;height:124px;background:#000"></div>
<svg class="abs" style="left:702px;top:659px" width="122.8" height="92" viewBox="0 0 122.8 92">
<defs>
<linearGradient id="kb1" x1="0" y1="0" x2="0" y2="1"><stop offset="0" stop-color="#4b5654"/><stop offset=".55" stop-color="#3c4644"/><stop offset="1" stop-color="#2e3735"/></linearGradient>
<linearGradient id="kb2" x1="0" y1="0" x2="0" y2="1"><stop offset="0" stop-color="#3f4947"/><stop offset="1" stop-color="#2c3533"/></linearGradient>
<linearGradient id="kb3" x1="0" y1="0" x2="0" y2="1"><stop offset="0" stop-color="#1b2120"/><stop offset=".5" stop-color="#0a0c0c"/><stop offset="1" stop-color="#1a0b08"/></linearGradient>
<linearGradient id="wd" x1="0" y1="0" x2="0" y2="1"><stop offset="0" stop-color="#1e0906"/><stop offset=".3" stop-color="#4a190f"/><stop offset=".5" stop-color="#9a5536"/><stop offset=".6" stop-color="#b57450"/><stop offset="1" stop-color="#bd815d"/></linearGradient>
<linearGradient id="key" x1="0" y1="0" x2="0" y2="1"><stop offset="0" stop-color="#4d5856"/><stop offset=".7" stop-color="#343d3c"/><stop offset="1" stop-color="#1e2424"/></linearGradient>
</defs>
<rect width="122.8" height="92" fill="#161b1a"/>
<path d="M2 2 H19 L21 14.5 H0.8Z M24 1.5 H39 L41.5 14.5 H22.5Z M45 1 H60 L62.5 14.5 H43.5Z M66 1 H81 L84 14.5 H64.5Z M87 1 H101 L105 14.5 H85.5Z M107.5 1 H122.8 V14.5 H106.5Z" fill="url(#key)"/>
<path d="M20.5 2 L22.8 14 M42 1.5 L44.5 14 M63.2 1 L66 14 M84.6 1 L88.4 14 M104.5 1 L109 14" stroke="#e4eaea" stroke-width="2" opacity=".85" stroke-linecap="round"/>
<path d="M0 17.5 H10.5 L8 41 H0Z" fill="#262d33"/>
<path d="M14.5 17 H122.8 V34.5 L10.5 36.5Z" fill="url(#kb1)"/>
<path d="M10.5 36.5 L122.8 34.5 V41 L10 42Z" fill="#0c0f0f"/>
<path d="M0 43 L122.8 41 V52.5 L0 54.5Z" fill="url(#kb2)"/>
<path d="M0 54.5 L122.8 52.5 V54 L0 56Z" fill="#0e1111"/>
<path d="M0 56 L122.8 54 V72 H0Z" fill="url(#kb3)"/>
<path d="M8 60 C30 57 60 57.5 122.8 56.5 V58 C60 59.5 30 59.5 8 62Z" fill="#4a5553" opacity=".5"/>
<rect x="0" y="69.5" width="122.8" height="22.5" fill="url(#wd)"/>
<path d="M60 80 L122.8 88 M70 78 L122.8 82" stroke="#d29a76" stroke-width="1.2" opacity=".5"/>
</svg>
<div id="p2"></div>
<span class="t " style="left:978.6px;top:61.02px;font-size:14.57px;font-weight:700;color:#212529;">Task T53667.20 Associations</span>
<svg class="abs" style="left:1741.0px;top:61.6px;color:#212529" width="12.2" height="12.2"><use href="#i-x"/></svg>
<span class="t " style="left:978.6px;top:124.02px;font-size:18px;font-weight:400;color:#3c4248;transform:scaleX(.8);transform-origin:0 0">FORMS</span>
<span class="t " style="left:984.3px;top:164.02px;font-size:10.9px;font-weight:400;color:#222;letter-spacing:-.9px">REF</span>
<span class="t " style="left:1085.0px;top:164.02px;font-size:10.9px;font-weight:400;color:#222;letter-spacing:-.55px">DESCRIPTION</span>
<span class="t " style="left:1268.9px;top:164.02px;font-size:10.9px;font-weight:400;color:#222;letter-spacing:-.2px">LOCATION</span>
<span class="t " style="left:1514.6px;top:164.02px;font-size:10.9px;font-weight:400;color:#222;letter-spacing:-.35px">STATUS</span>
<span class="t " style="left:1617.2px;top:164.02px;font-size:10.9px;font-weight:400;color:#222;letter-spacing:-.35px">FORM DATE</span>
<div class="abs" style="left:978.2px;top:186.2px;width:779.8px;height:36.6px;background:#f5f6f8;border-top:1px solid #dee2e6;border-bottom:1px solid #dee2e6"></div>
<span class="t " style="left:984.3px;top:199.02px;font-size:11.75px;font-weight:400;color:#3498db;">F53667.71</span>
<span class="t " style="left:1085.0px;top:199.02px;font-size:12.7px;font-weight:400;color:#212529;">Detailed ITP - 21/2/24</span>
<span class="t " style="left:1268.9px;top:199.02px;font-size:12.7px;font-weight:400;color:#212529;">Ground Level&gt;Roma Hospital</span>
<div class="abs" style="left:1513.8px;top:197.2px;width:14.2px;height:12.8px;background:#cc0000;border:1px solid #7a0000"></div>
<span class="t " style="left:1533.0px;top:199.02px;font-size:12.7px;font-weight:400;color:#212529;">Opened</span>
<span class="t " style="left:1617.2px;top:198.02px;font-size:13.0px;font-weight:400;color:#212529;">21/02/2024</span>
<div id="p3"></div>
<span class="t " style="left:890.9px;top:649.02px;font-size:14.78px;font-weight:700;color:#212529;">Task T53667.20 Details</span>
<svg class="abs" style="left:1653.0px;top:649.6px;color:#212529" width="12.2" height="12.2"><use href="#i-x"/></svg>
<span class="t " style="left:903.1px;top:706.02px;font-size:11px;font-weight:400;color:#333;letter-spacing:-.65px">IMAGES</span>
<span class="t " style="left:967.7px;top:706.02px;font-size:11px;font-weight:400;color:#333;letter-spacing:-.47px">COMMENTS</span>
<span class="t " style="left:1053.6px;top:706.02px;font-size:11px;font-weight:400;color:#333;letter-spacing:-.51px">DOCUMENTS</span>
<span class="t " style="left:1145.4px;top:706.02px;font-size:11px;font-weight:400;color:#333;letter-spacing:-.55px">PLAN</span>
<div class="abs" style="left:955px;top:728.2px;width:86px;height:2.8px;background:#3498db"></div>
<svg class="abs" style="left:902.4px;top:746px" width="15" height="15" viewBox="0 0 15 15"><path d="M7.5 0.6V14.4M0.6 7.5H14.4" stroke="#1565a5" stroke-width="2.3" stroke-linecap="round"/></svg>
<span class="t " style="left:927.3px;top:749.02px;font-size:12.8px;font-weight:700;color:#1b6cab;letter-spacing:-.1px">Add Comment</span>
<span class="t " style="left:896.1px;top:781.02px;font-size:10.9px;font-weight:400;color:#222;letter-spacing:-.4px">COMMENTS</span>
<span class="t " style="left:1197.2px;top:781.02px;font-size:10.9px;font-weight:400;color:#222;letter-spacing:-.75px">USER</span>
<span class="t " style="left:1306.7px;top:781.02px;font-size:10.9px;font-weight:400;color:#222;letter-spacing:-.25px">ORGANISATION</span>
<span class="t " style="left:1432.6px;top:781.02px;font-size:10.9px;font-weight:400;color:#222;letter-spacing:-.35px">DATE</span>
<div class="abs" style="left:890.2px;top:804px;width:779.8px;height:36.6px;background:#f5f6f8;border-top:1px solid #dee2e6;border-bottom:1px solid #dee2e6"></div>
<div class="hl" style="left:890.2px;top:876.1px;width:779.8px"></div>
<span class="t " style="left:896.1px;top:816.02px;font-size:12.8px;font-weight:400;color:#212529;">Done as requested</span>
<span class="t " style="left:1197.2px;top:815.02px;font-size:13.05px;font-weight:400;color:#212529;">Warren Harris</span>
<span class="t " style="left:1306.7px;top:816.02px;font-size:12.15px;font-weight:400;color:#212529;">Viewpoint SALES</span>
<span class="t " style="left:1432.6px;top:816.02px;font-size:12.6px;font-weight:400;color:#212529;">27/02/2024, 15:12:36</span>
<svg class="abs" style="left:1587.4px;top:815.1px;color:#3498db" width="12.6" height="12.6"><use href="#i-pen"/></svg>
<svg class="abs" style="left:1614.2px;top:814.9px;color:#f0202c" width="10.6" height="12.4"><use href="#i-trash"/></svg>
<span class="t " style="left:896.1px;top:851.02px;font-size:13.1px;font-weight:400;color:#212529;">Follow up to check quality and completion</span>
<span class="t " style="left:1197.2px;top:851.02px;font-size:13.05px;font-weight:400;color:#212529;">Warren Harris</span>
<span class="t " style="left:1306.7px;top:852.02px;font-size:12.15px;font-weight:400;color:#212529;">Viewpoint SALES</span>
<span class="t " style="left:1432.6px;top:852.02px;font-size:12.6px;font-weight:400;color:#212529;">26/09/2025, 08:50:07</span>
<svg class="abs" style="left:1587.4px;top:851.2px;color:#3498db" width="12.6" height="12.6"><use href="#i-pen"/></svg>
<svg class="abs" style="left:1614.2px;top:851.0px;color:#f0202c" width="10.6" height="12.4"><use href="#i-trash"/></svg>
</div>
</body></html>
